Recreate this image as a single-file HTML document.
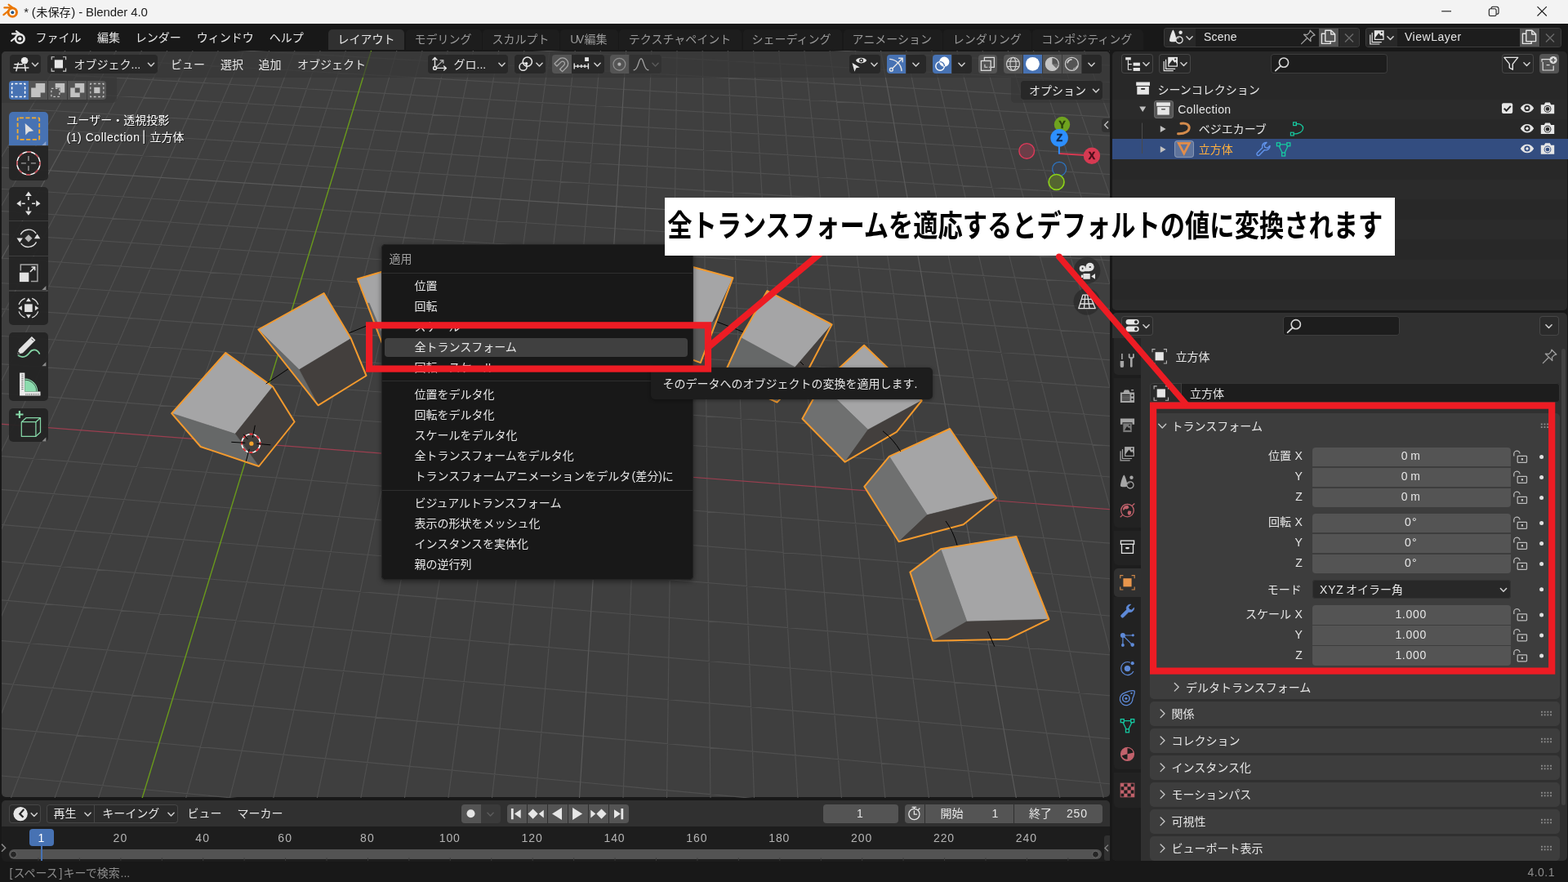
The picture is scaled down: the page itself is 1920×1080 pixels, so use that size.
<!DOCTYPE html>
<html lang="ja"><head><meta charset="utf-8"><title>* (未保存) - Blender 4.0</title>
<style>
html,body{margin:0;padding:0;background:#181818;}
body{width:1920px;height:1080px;overflow:hidden;position:relative;font-family:"Liberation Sans","Noto Sans CJK JP",sans-serif;}
.sec{position:absolute;left:0;top:0;width:1920px;height:1080px;pointer-events:none;}
.sec>div{position:absolute;box-sizing:border-box;}
.ov{position:absolute;left:0;top:0;width:1920px;height:1080px;overflow:hidden;will-change:transform;}
.ov text{font-family:"Liberation Sans","Noto Sans CJK JP",sans-serif;white-space:pre;}
.tx{position:absolute;color:transparent;white-space:nowrap;line-height:1;overflow:hidden;height:1em;}
</style></head>
<body>
<div class="sec" id="titlebar">
<div style="left:0px;top:0px;width:1920px;height:29.3px;background:#f3f3f3;"></div>
<svg class="ov" width="1920" height="1080" viewBox="0 0 1920 1080"><g fill="#1a1a1a"><text x="29.3" y="20.2" font-size="15" textLength="14.4" lengthAdjust="spacing">* (</text></g>
<g fill="#1a1a1a"><text x="44.2" y="19.8" font-size="14.2">未保存</text></g>
<g fill="#1a1a1a"><text x="87.2" y="20.2" font-size="15" textLength="93.62" lengthAdjust="spacing">) - Blender 4.0</text></g>
<g transform="translate(15,15)"><g stroke="#ea7600" stroke-width="2.3" stroke-linecap="round" fill="none"><path d="M-10.6 3.1L-1.5 -4.2"/><path d="M-9.6 -5.6H-1.5"/><path d="M-4.3 -9.2L1 -5.2"/></g><circle r="6.6" cx="0.3" cy="0.2" fill="#ea7600"/><circle r="3.7" cx="0.3" cy="0.2" fill="#fff"/><circle r="2" cx="0.3" cy="0.2" fill="#265787"/></g>
<g stroke="#1a1a1a" stroke-width="1.1" fill="none"><path d="M1765.2 13.8H1777"/><rect x="1823.3" y="10.7" width="8.8" height="8.8" rx="1.8"/><path d="M1826 10.4V10.2A1.9 1.9 0 0 1 1827.9 8.3H1832.6A2.4 2.4 0 0 1 1835 10.7V15.4A1.9 1.9 0 0 1 1833.1 17.3H1832.4"/><path d="M1882.5 8.2L1893.8 19.5M1893.8 8.2L1882.5 19.5"/></g></svg>
<span class="tx" style="left:44.2px;top:7.3px;font-size:14.2px;width:42.6px">未保存</span>
</div>
<div class="sec" id="topbar">
<div style="left:0px;top:29.3px;width:1920px;height:32.7px;background:#181818;"></div>
<div style="left:402px;top:36px;width:93px;height:25px;background:#303030;border-radius:5px 5px 0 0;"></div>
<div style="left:496.7px;top:36px;width:93.4px;height:25px;background:#1d1d1d;border-radius:5px 5px 0 0;"></div>
<div style="left:591.4px;top:36px;width:93.5px;height:25px;background:#1d1d1d;border-radius:5px 5px 0 0;"></div>
<div style="left:686.2px;top:36px;width:70.6px;height:25px;background:#1d1d1d;border-radius:5px 5px 0 0;"></div>
<div style="left:758.1px;top:36px;width:150.4px;height:25px;background:#1d1d1d;border-radius:5px 5px 0 0;"></div>
<div style="left:909.8px;top:36px;width:121.4px;height:25px;background:#1d1d1d;border-radius:5px 5px 0 0;"></div>
<div style="left:1032.5px;top:36px;width:121.5px;height:25px;background:#1d1d1d;border-radius:5px 5px 0 0;"></div>
<div style="left:1155.3px;top:36px;width:107.7px;height:25px;background:#1d1d1d;border-radius:5px 5px 0 0;"></div>
<div style="left:1264.3px;top:36px;width:135.9px;height:25px;background:#1d1d1d;border-radius:5px 5px 0 0;"></div>
<svg class="ov" width="1920" height="1080" viewBox="0 0 1920 1080"><g transform="translate(24.1,47.2)"><g stroke="#e6e6e6" stroke-width="2.2" stroke-linecap="round" fill="none"><path d="M-10.1 2.8L-1.4 -4.2"/><path d="M-9.1 -5.9H-1.4"/><path d="M-4.2 -9L1 -5.1"/></g><circle r="6.6" cx="0.2" cy="0.2" fill="#e6e6e6"/><circle r="4" cx="0.2" cy="0.2" fill="#181818"/><circle r="2.2" cx="0.2" cy="0.2" fill="#e6e6e6"/></g>
<g fill="#e6e6e6"><text x="43.6" y="50.6" font-size="14">ファイル</text></g>
<g fill="#e6e6e6"><text x="119" y="50.6" font-size="14">編集</text></g>
<g fill="#e6e6e6"><text x="165.8" y="50.6" font-size="14">レンダー</text></g>
<g fill="#e6e6e6"><text x="240.8" y="50.6" font-size="14">ウィンドウ</text></g>
<g fill="#e6e6e6"><text x="329.8" y="50.6" font-size="14">ヘルプ</text></g>
<g fill="#e6e6e6"><text x="413.6" y="53.3" font-size="14">レイアウト</text></g>
<g fill="#989898"><text x="507.6" y="53.3" font-size="14">モデリング</text></g>
<g fill="#989898"><text x="602.6" y="53.3" font-size="14">スカルプト</text></g>
<g fill="#989898"><text x="698.3" y="53.3" font-size="14" textLength="17.11" lengthAdjust="spacing">UV</text><text x="715.41" y="53.3" font-size="14">編集</text></g>
<g fill="#989898"><text x="769.8" y="53.3" font-size="14">テクスチャペイント</text></g>
<g fill="#989898"><text x="920.5" y="53.3" font-size="14">シェーディング</text></g>
<g fill="#989898"><text x="1043.5" y="53.3" font-size="14">アニメーション</text></g>
<g fill="#989898"><text x="1166.8" y="53.3" font-size="14">レンダリング</text></g>
<g fill="#989898"><text x="1275.2" y="53.3" font-size="14">コンポジティング</text></g></svg>
<span class="tx" style="left:43.6px;top:38.28px;font-size:14px;width:56px">ファイル</span><span class="tx" style="left:119px;top:38.28px;font-size:14px;width:28px">編集</span><span class="tx" style="left:165.8px;top:38.28px;font-size:14px;width:56px">レンダー</span><span class="tx" style="left:240.8px;top:38.28px;font-size:14px;width:70px">ウィンドウ</span><span class="tx" style="left:329.8px;top:38.28px;font-size:14px;width:42px">ヘルプ</span><span class="tx" style="left:413.6px;top:40.98px;font-size:14px;width:70px">レイアウト</span><span class="tx" style="left:507.6px;top:40.98px;font-size:14px;width:70px">モデリング</span><span class="tx" style="left:602.6px;top:40.98px;font-size:14px;width:70px">スカルプト</span><span class="tx" style="left:715.41px;top:40.98px;font-size:14px;width:28px">編集</span><span class="tx" style="left:769.8px;top:40.98px;font-size:14px;width:126px">テクスチャペイント</span><span class="tx" style="left:920.5px;top:40.98px;font-size:14px;width:98px">シェーディング</span><span class="tx" style="left:1043.5px;top:40.98px;font-size:14px;width:98px">アニメーション</span><span class="tx" style="left:1166.8px;top:40.98px;font-size:14px;width:84px">レンダリング</span><span class="tx" style="left:1275.2px;top:40.98px;font-size:14px;width:112px">コンポジティング</span>
</div>
<div class="sec" id="viewport" style="clip-path:inset(62.5px 561px 103.7px 2px)">
<div style="left:2px;top:62.5px;width:1357px;height:913.8px;background:#3f3f3f;border-radius:5px;"></div>
<svg class="ov" width="1920" height="1080" viewBox="0 0 1920 1080"><path d="M-498.01 1025.84L391.19 -457.54M-446.22 1031.08L409.39 -456.92M-341.94 1041.61L445.88 -455.68M-289.43 1046.92L464.17 -455.06M-236.69 1052.25L482.48 -454.43M-183.69 1057.6L500.82 -453.81M-130.46 1062.98L519.19 -453.18M-76.97 1068.38L537.59 -452.56M-23.24 1073.81L556.02 -451.93M30.75 1079.27L574.48 -451.3M84.99 1084.75L592.97 -450.67M194.24 1095.79L630.02 -449.41M249.25 1101.34L648.6 -448.78M304.52 1106.93L667.2 -448.14M360.06 1112.54L685.83 -447.51M415.86 1118.18L704.49 -446.87M471.92 1123.84L723.18 -446.24M528.25 1129.53L741.9 -445.6M584.85 1135.25L760.65 -444.96M641.73 1141L779.43 -444.32M756.3 1152.57L817.07 -443.04M814 1158.4L835.94 -442.4M871.98 1164.26L854.84 -441.76M930.25 1170.15L873.76 -441.11M988.79 1176.07L892.72 -440.47M1047.63 1182.01L911.71 -439.82M1106.75 1187.98L930.72 -439.17M1166.16 1193.99L949.77 -438.52M1225.87 1200.02L968.85 -437.87M1346.16 1212.17L1007.09 -436.57M1406.76 1218.29L1026.26 -435.92M1467.65 1224.45L1045.46 -435.27M1528.85 1230.63L1064.69 -434.61M1590.36 1236.85L1083.95 -433.95M1652.17 1243.09L1103.24 -433.3M1714.3 1249.37L1122.56 -432.64M1776.73 1255.68L1141.91 -431.98M1839.48 1262.02L1161.3 -431.32M1965.94 1274.79L1200.16 -430M2029.65 1281.23L1219.63 -429.33M2093.69 1287.7L1239.14 -428.67M2158.05 1294.2L1258.68 -428.01M2222.75 1300.74L1278.25 -427.34M2287.77 1307.31L1297.85 -426.67M2353.13 1313.91L1317.49 -426M2418.83 1320.55L1337.15 -425.33M2484.87 1327.22L1356.85 -424.66M2617.97 1340.67L1396.34 -423.32M2685.05 1347.45L1416.13 -422.64M2752.47 1354.26L1435.96 -421.97M2820.25 1361.11L1455.81 -421.29M-498.01 1025.84L2888.39 1367.99M-427.91 908.89L2766.92 1214.21M-395.53 854.88L2711.45 1143.98M-364.75 803.54L2659.1 1077.69M-335.46 754.68L2609.6 1015.02M-307.56 708.13L2562.74 955.69M-280.94 663.72L2518.3 899.43M-255.52 621.32L2476.11 846M-231.23 580.79L2435.99 795.21M-207.98 542.01L2397.8 746.86M-164.37 469.25L2326.68 656.81M-143.88 435.08L2293.51 614.81M-124.22 402.28L2261.79 574.65M-105.32 370.74L2231.43 536.22M-87.14 340.42L2202.35 499.4M-69.64 311.22L2174.46 464.09M-52.78 283.11L2147.7 430.21M-36.54 256.01L2122 397.66M-20.87 229.87L2097.29 366.38M8.86 180.28L2050.64 307.31M22.97 156.73L2028.59 279.4M36.62 133.97L2007.34 252.5M49.82 111.95L1986.84 226.54M62.59 90.64L1967.05 201.48M74.97 70L1947.94 177.28M86.95 50L1929.46 153.89M98.58 30.61L1911.6 131.28M109.85 11.8L1894.32 109.39M131.4 -24.15L1861.38 67.69M141.71 -41.35L1845.67 47.81M151.73 -58.07L1830.45 28.53M161.47 -74.31L1815.68 9.83M170.94 -90.1L1801.35 -8.32M180.15 -105.47L1787.43 -25.93M189.11 -120.42L1773.92 -43.04M197.83 -134.97L1760.79 -59.67M206.33 -149.14L1748.02 -75.83M222.67 -176.4L1723.53 -106.84M230.53 -189.52L1711.78 -121.72M238.2 -202.31L1700.34 -136.2M245.67 -214.78L1689.2 -150.31M252.97 -226.95L1678.34 -164.06M260.09 -238.83L1667.76 -177.45M267.04 -250.43L1657.45 -190.51M273.83 -261.76L1647.39 -203.25M280.46 -272.82L1637.58 -215.67M293.28 -294.19L1618.66 -239.62M299.47 -304.52L1609.53 -251.17M305.52 -314.62L1600.62 -262.46M311.44 -324.5L1591.92 -273.48M317.24 -334.17L1583.41 -284.25M322.91 -343.63L1575.09 -294.78M328.46 -352.88L1566.97 -305.07M333.89 -361.95L1559.02 -315.13M339.21 -370.82L1551.24 -324.98M349.53 -388.03L1536.19 -344.04M354.53 -396.38L1528.9 -353.27M359.43 -404.56L1521.76 -362.3M364.24 -412.57L1514.77 -371.15M368.95 -420.43L1507.93 -379.82M373.57 -428.14L1501.22 -388.31M378.1 -435.7L1494.65 -396.63M382.55 -443.12L1488.21 -404.78M386.91 -450.4L1481.89 -412.78" stroke="#505050" stroke-width="1.15" fill="none"/>
<path d="M-394.2 1036.33L427.62 -456.3M698.88 1146.77L798.23 -443.68M1285.87 1206.08L987.95 -437.22M1902.55 1268.39L1180.71 -430.66M2551.25 1333.93L1376.58 -423.99M-462.02 965.8L2825.79 1288.74M-5.75 204.64L2073.52 336.29M120.79 -6.44L1877.58 88.21M214.6 -162.95L1735.61 -91.55M286.94 -283.63L1628 -227.79M344.42 -379.52L1543.63 -334.61" stroke="#5a5a5a" stroke-width="1.2" fill="none"/>
<path d="M-185.71 504.86L2361.4 700.78" stroke="#9b3f50" stroke-width="1.2" fill="none"/>
<path d="M139.49 1090.25L611.48 -450.04" stroke="#6a9a1c" stroke-width="1.4" fill="none"/>
<polygon points="276.3,432 334,473.5 288,531.3 210.2,506.2" fill="#a5a5a6" stroke="#a5a5a6" stroke-width="0.6" stroke-linejoin="round"/>
<polygon points="334,473.5 360.6,516.5 317,571 288,531.3" fill="#433f3d" stroke="#433f3d" stroke-width="0.6" stroke-linejoin="round"/>
<polygon points="210.2,506.2 288,531.3 317,571 245.7,547" fill="#666868" stroke="#666868" stroke-width="0.6" stroke-linejoin="round"/>
<polygon points="276.3,432 334,473.5 360.6,516.5 317,571 245.7,547 210.2,506.2" fill="none" stroke="#f39a2e" stroke-width="2" stroke-linejoin="round"/>
<polygon points="396.6,359 429.8,414.6 366.3,452.7 316.3,403.5" fill="#a5a5a6" stroke="#a5a5a6" stroke-width="0.6" stroke-linejoin="round"/>
<polygon points="429.8,414.6 448.5,460 389.6,496.3 366.3,452.7" fill="#433f3d" stroke="#433f3d" stroke-width="0.6" stroke-linejoin="round"/>
<polygon points="316.3,403.5 366.3,452.7 389.6,496.3" fill="#666868" stroke="#666868" stroke-width="0.6" stroke-linejoin="round"/>
<polygon points="396.6,359 429.8,414.6 448.5,460 389.6,496.3 316.3,403.5" fill="none" stroke="#f39a2e" stroke-width="2" stroke-linejoin="round"/>
<polygon points="437.8,341.5 480,329 480,440 466.2,416" fill="#a5a5a6" stroke="#a5a5a6" stroke-width="0.6" stroke-linejoin="round"/>
<polygon points="449.5,371.5 452,371 468,409 466.2,416" fill="#666868" stroke="#666868" stroke-width="0.6" stroke-linejoin="round"/>
<polyline points="480,329.3 437.8,341.5 466.4,416.4 480,452" fill="none" stroke="#f39a2e" stroke-width="2" stroke-linejoin="round"/>
<polygon points="830,322 897.5,340.2 872.6,394.4 830,404" fill="#a5a5a6" stroke="#a5a5a6" stroke-width="0.6" stroke-linejoin="round"/>
<polygon points="830,404 872.6,394.4 879,389 857.8,444.1 830,434" fill="#5b5b5b" stroke="#5b5b5b" stroke-width="0.6" stroke-linejoin="round"/>
<polygon points="897.5,340.2 879.2,388.4 872.6,394.4" fill="#433f3d" stroke="#433f3d" stroke-width="0.6" stroke-linejoin="round"/>
<polyline points="830,322 897.5,340.2 857.8,444.1 830,434" fill="none" stroke="#f39a2e" stroke-width="2" stroke-linejoin="round"/>
<polygon points="939.4,356.2 1018.6,397.3 973.5,449.7 907.1,413.4" fill="#a5a5a6" stroke="#a5a5a6" stroke-width="0.6" stroke-linejoin="round"/>
<polygon points="907.1,413.4 973.5,449.7 951.5,492.6 885,462" fill="#666868" stroke="#666868" stroke-width="0.6" stroke-linejoin="round"/>
<polygon points="1018.6,397.3 990,452 951.5,492.6 973.5,449.7" fill="#433f3d" stroke="#433f3d" stroke-width="0.6" stroke-linejoin="round"/>
<polygon points="939.4,356.2 1018.6,397.3 990,452 951.5,492.6 885,462 907.1,413.4" fill="none" stroke="#f39a2e" stroke-width="2" stroke-linejoin="round"/>
<polygon points="1058.1,422.8 1128.7,490.5 1062.9,526.2 1005.6,470.9" fill="#a5a5a6" stroke="#a5a5a6" stroke-width="0.6" stroke-linejoin="round"/>
<polygon points="1005.6,470.9 1062.9,526.2 1034.7,565.7 982.4,512.8" fill="#6f7070" stroke="#6f7070" stroke-width="0.6" stroke-linejoin="round"/>
<polygon points="1128.7,490.5 1097.9,528.9 1034.7,565.7 1062.9,526.2" fill="#433f3d" stroke="#433f3d" stroke-width="0.6" stroke-linejoin="round"/>
<polygon points="1058.1,422.8 1128.7,490.5 1097.9,528.9 1034.7,565.7 982.4,512.8 1005.6,470.9" fill="none" stroke="#f39a2e" stroke-width="2" stroke-linejoin="round"/>
<polygon points="1163.1,525 1220,609.7 1135.3,630.6 1088.9,558.9" fill="#a5a5a6" stroke="#a5a5a6" stroke-width="0.6" stroke-linejoin="round"/>
<polygon points="1088.9,558.9 1135.3,630.6 1100.6,663.3 1058.3,595.8" fill="#6f7070" stroke="#6f7070" stroke-width="0.6" stroke-linejoin="round"/>
<polygon points="1135.3,630.6 1220,609.7 1179.7,642.2 1100.6,663.3" fill="#433f3d" stroke="#433f3d" stroke-width="0.6" stroke-linejoin="round"/>
<polygon points="1163.1,525 1220,609.7 1179.7,642.2 1100.6,663.3 1058.3,595.8 1088.9,558.9" fill="none" stroke="#f39a2e" stroke-width="2" stroke-linejoin="round"/>
<polygon points="1244.4,657 1284.4,758.3 1183.9,761.1 1151.9,672.2" fill="#a5a5a6" stroke="#a5a5a6" stroke-width="0.6" stroke-linejoin="round"/>
<polygon points="1151.9,672.2 1183.9,761.1 1142.2,784.7 1114.4,700.6" fill="#6f7070" stroke="#6f7070" stroke-width="0.6" stroke-linejoin="round"/>
<polygon points="1183.9,761.1 1284.4,758.3 1233.9,782.8 1142.2,784.7" fill="#433f3d" stroke="#433f3d" stroke-width="0.6" stroke-linejoin="round"/>
<polygon points="1244.4,657 1284.4,758.3 1233.9,782.8 1142.2,784.7 1114.4,700.6 1151.9,672.2" fill="none" stroke="#f39a2e" stroke-width="2" stroke-linejoin="round"/>
<path d="M325.7 470 L352.8 451.8 M427.4 407.8 L448.4 399.2 M1081 527.8 Q1094 538 1102.8 552.8 M1158 638 Q1167 650 1172 667.5 M1209.7 773 L1217.8 791.7 M878.3 394.2 L909.8 406.3 M980 443 L984 447" stroke="#000" stroke-width="1" fill="none"/>
<g transform="translate(307.3,542.8)"><circle r="11.3" fill="none" stroke="#fff" stroke-width="1.6"/><circle r="11.3" fill="none" stroke="#e0222a" stroke-width="1.8" stroke-dasharray="4.44 4.44" stroke-dashoffset="2.2"/><path d="M-24 -1.5L-7 -0.5M7 0.5L24 2M5 -22L2 -7M-2 7L-6 22M-9 -11L-4 -5" stroke="#000" stroke-width="1" fill="none"/><circle r="2.6" cx="0.6" cy="0.4" fill="#f5a32c"/></g></svg>

</div>
<div class="sec" id="viewport-ui" style="clip-path:inset(62.5px 561px 103.7px 2px)">
<div style="left:2px;top:62.5px;width:1357px;height:32.5px;background:rgba(55,55,55,0.68);border-radius:5px 5px 0 0;"></div>
<div style="left:2px;top:95px;width:141px;height:31px;background:rgba(55,55,55,0.68);border-radius:0 0 5px 0;"></div>
<div style="left:1238px;top:95px;width:121px;height:31px;background:rgba(55,55,55,0.68);border-radius:0 0 0 5px;"></div>
<div style="left:12px;top:67px;width:38px;height:23px;background:#282828;border-radius:4px;"></div>
<div style="left:58px;top:67px;width:135px;height:23px;background:#282828;border-radius:4px;"></div>
<div style="left:524px;top:67px;width:98px;height:23px;background:#282828;border-radius:4px;"></div>
<div style="left:630px;top:67px;width:38px;height:23px;background:#282828;border-radius:4px;"></div>
<div style="left:676px;top:67px;width:23.5px;height:23px;background:#545454;border-radius:4px 0 0 4px;"></div>
<div style="left:700px;top:67px;width:39.5px;height:23px;background:#282828;border-radius:0 4px 4px 0;"></div>
<div style="left:747px;top:67px;width:23px;height:23px;background:#545454;border-radius:4px 0 0 4px;"></div>
<div style="left:771px;top:67px;width:38.5px;height:23px;background:#323232;border-radius:0 4px 4px 0;"></div>
<div style="left:1040px;top:67px;width:38px;height:23px;background:#282828;border-radius:4px;"></div>
<div style="left:1086px;top:67px;width:23px;height:23px;background:#4772b3;border-radius:4px 0 0 4px;"></div>
<div style="left:1110px;top:67px;width:24px;height:23px;background:#282828;border-radius:0 4px 4px 0;"></div>
<div style="left:1142px;top:67px;width:23px;height:23px;background:#4772b3;border-radius:4px 0 0 4px;"></div>
<div style="left:1166px;top:67px;width:24px;height:23px;background:#282828;border-radius:0 4px 4px 0;"></div>
<div style="left:1198px;top:67px;width:23px;height:23px;background:#545454;border-radius:4px;"></div>
<div style="left:1229px;top:67px;width:23.4px;height:23px;background:#545454;border-radius:4px 0 0 4px;"></div>
<div style="left:1253px;top:67px;width:23.2px;height:23px;background:#4772b3;"></div>
<div style="left:1277px;top:67px;width:23px;height:23px;background:#545454;"></div>
<div style="left:1301px;top:67px;width:23px;height:23px;background:#545454;"></div>
<div style="left:1325px;top:67px;width:23.5px;height:23px;background:#282828;border-radius:0 4px 4px 0;"></div>
<div style="left:1250px;top:99px;width:100px;height:23px;background:#282828;border-radius:4px;"></div>
<div style="left:11px;top:99px;width:23.5px;height:23px;background:#4772b3;border-radius:4px 0 0 4px;"></div>
<div style="left:35px;top:99px;width:23.2px;height:23px;background:#545454;"></div>
<div style="left:59px;top:99px;width:23.2px;height:23px;background:#545454;"></div>
<div style="left:83px;top:99px;width:23.2px;height:23px;background:#545454;"></div>
<div style="left:107px;top:99px;width:23.2px;height:23px;background:#545454;border-radius:0 4px 4px 0;"></div>
<div style="left:11px;top:137px;width:48px;height:41.4px;background:#4772b3;border-radius:5px 5px 0 0;"></div>
<div style="left:11px;top:179.3px;width:48px;height:41.4px;background:rgba(36,36,36,0.93);border-radius:0 0 5px 5px;"></div>
<div style="left:11px;top:228.6px;width:48px;height:41.4px;background:rgba(36,36,36,0.93);border-radius:5px 5px 0 0;"></div>
<div style="left:11px;top:271.2px;width:48px;height:41.4px;background:rgba(36,36,36,0.93);border-radius:0 0 0 0;"></div>
<div style="left:11px;top:313.9px;width:48px;height:41.4px;background:rgba(36,36,36,0.93);border-radius:0 0 0 0;"></div>
<div style="left:11px;top:356.6px;width:48px;height:41.4px;background:rgba(36,36,36,0.93);border-radius:0 0 5px 5px;"></div>
<div style="left:11px;top:407.2px;width:48px;height:41.4px;background:rgba(36,36,36,0.93);border-radius:5px 5px 0 0;"></div>
<div style="left:11px;top:449.4px;width:48px;height:41.4px;background:rgba(36,36,36,0.93);border-radius:0 0 5px 5px;"></div>
<div style="left:11px;top:499.5px;width:48px;height:41.4px;background:rgba(36,36,36,0.93);border-radius:5px 5px 5px 5px;"></div>
<div style="left:1349px;top:145px;width:11px;height:17px;background:rgba(48,48,48,0.9);border-radius:4px 0 0 4px;"></div>
<svg class="ov" width="1920" height="1080" viewBox="0 0 1920 1080"><path d="M39.4 77.2L43 80.9L46.6 77.2" stroke="#d0d0d0" stroke-width="1.5" fill="none" stroke-linecap="round" stroke-linejoin="round"/>
<g transform="translate(25.9,79)"><g stroke="#e6e6e6" stroke-width="1.5" fill="none" stroke-linecap="round"><path d="M-8 -0.2H1.5M-9 4H9M-3.5 -2L-6 7.7M4.5 0.5L5.5 7.7"/></g><circle cx="4.2" cy="-4.8" r="4.3" fill="#e6e6e6"/><circle cx="3" cy="-6" r="1.2" fill="#fff"/></g>
<g fill="#e6e6e6"><text x="90.5" y="83.6" font-size="14">オブジェク</text><text x="160.5" y="83.6" font-size="14">...</text></g>
<path d="M181.4 77.2L185 80.9L188.6 77.2" stroke="#d0d0d0" stroke-width="1.5" fill="none" stroke-linecap="round" stroke-linejoin="round"/>
<g transform="translate(71.9,78.4)"><path d="M-8.7 -5.1V-8.7H-5.1M5.1 -8.7H8.7V-5.1M8.7 5.1V8.7H5.1M-5.1 8.7H-8.7V5.1" stroke="#e6e6e6" stroke-width="1.15" fill="none" opacity="0.85"/><rect x="-5.1" y="-5.1" width="10.2" height="10.2" fill="#e6e6e6"/></g>
<g fill="#e6e6e6"><text x="209" y="83.6" font-size="14">ビュー</text></g>
<g fill="#e6e6e6"><text x="270" y="83.6" font-size="14">選択</text></g>
<g fill="#e6e6e6"><text x="316.5" y="83.6" font-size="14">追加</text></g>
<g fill="#e6e6e6"><text x="364" y="83.6" font-size="14">オブジェクト</text></g>
<g fill="#e6e6e6"><text x="555.5" y="83.6" font-size="14">グロ</text><text x="583.5" y="83.6" font-size="14">...</text></g>
<path d="M610.9 77.2L614.5 80.9L618.1 77.2" stroke="#d0d0d0" stroke-width="1.5" fill="none" stroke-linecap="round" stroke-linejoin="round"/>
<g transform="translate(538,78.5)"><g stroke="#e6e6e6" stroke-width="1.4" fill="none" stroke-linecap="round" stroke-linejoin="round"><path d="M-5.5 3V-7.5M-8 -5.2L-5.5 -8L-3 -5.2M-3.8 4.9H8M5.6 2.4L8.4 4.9L5.6 7.4"/><path d="M-4 3.5L4.5 -4.5M1.2 -4.8H4.8V-1.2" stroke="#a8a8a8"/><circle cx="-5.5" cy="4.9" r="1.9" fill="#282828"/></g></g>
<path d="M656.9 77.2L660.5 80.9L664.1 77.2" stroke="#d0d0d0" stroke-width="1.5" fill="none" stroke-linecap="round" stroke-linejoin="round"/>
<g transform="translate(643.6,78.5)"><g stroke="#e6e6e6" stroke-width="1.5" fill="none"><circle cx="2.2" cy="-2.9" r="5.6"/><circle cx="-3" cy="3.2" r="4.6"/></g><circle cx="1" cy="-0.8" r="1.7" fill="#e6e6e6"/></g>
<path d="M727.9 77.2L731.5 80.9L735.1 77.2" stroke="#d0d0d0" stroke-width="1.5" fill="none" stroke-linecap="round" stroke-linejoin="round"/>
<g transform="translate(688,78.6)"><g transform="rotate(45)" stroke="#a6a6a6" stroke-width="1.3" fill="none" stroke-linejoin="round"><path d="M-6.8 6V-1.2A6.8 6.8 0 0 1 6.8 -1.2V6H2.6V-1.2A2.6 2.6 0 0 0 -2.6 -1.2V6Z"/></g></g>
<g transform="translate(711.8,78.8)"><path d="M-8.6 2.3H8.6M-8.6 -1.2V5.8M8.6 -1.2V5.8M-4.3 0.3V4.3M0 0.3V4.3M4.3 0.3V4.3" stroke="#e6e6e6" stroke-width="1.4" fill="none"/><rect x="4.3" y="-8.6" width="4.8" height="4.8" fill="#e6e6e6"/></g>
<path d="M798.9 77.2L802.5 80.9L806.1 77.2" stroke="#5a5a5a" stroke-width="1.5" fill="none" stroke-linecap="round" stroke-linejoin="round"/>
<g transform="translate(758.4,78.7)"><circle r="7.4" fill="none" stroke="#8e8e8e" stroke-width="1.2"/><circle r="2.1" fill="#b0b0b0"/></g>
<g transform="translate(785,78.8)"><path d="M-8.8 7C-3 7 -3.4 -7 0 -7S3 7 8.8 7" stroke="#a0a0a0" stroke-width="1.4" fill="none" stroke-linecap="round"/></g>
<path d="M1066.9 77.2L1070.5 80.9L1074.1 77.2" stroke="#d0d0d0" stroke-width="1.5" fill="none" stroke-linecap="round" stroke-linejoin="round"/>
<g transform="translate(1052,78.3)"><path d="M-4 -4.2C-1.5 -8.6 6.5 -8.6 9.2 -4.2C6.5 0.2 -1.5 0.2 -4 -4.2Z" fill="#e6e6e6"/><circle cx="2.6" cy="-4.3" r="2.5" fill="#282828"/><circle cx="2.6" cy="-4.3" r="1.1" fill="#e6e6e6"/><path d="M-8.5 -1.2L0.8 4.2L-3.6 5L-5.6 9.4Z" fill="#e6e6e6"/></g>
<path d="M1117.9 77.2L1121.5 80.9L1125.1 77.2" stroke="#d0d0d0" stroke-width="1.5" fill="none" stroke-linecap="round" stroke-linejoin="round"/>
<g transform="translate(1097.4,78.6)"><g stroke="#e6e6e6" stroke-width="1.4" fill="none" stroke-linecap="round" stroke-linejoin="round"><path d="M-7.8 -6.2C0 -5.5 6 0 6.6 8"/><path d="M-4.6 5.2L7.6 -7M3.2 -7.4H7.8V-2.8"/><circle cx="-6" cy="6.6" r="1.9"/></g></g>
<path d="M1173.9 77.2L1177.5 80.9L1181.1 77.2" stroke="#d0d0d0" stroke-width="1.5" fill="none" stroke-linecap="round" stroke-linejoin="round"/>
<g transform="translate(1153.5,78.3)"><circle cx="2.8" cy="-2.6" r="6.1" fill="#fff"/><circle cx="-2.4" cy="2.6" r="5.3" fill="none" stroke="#fff" stroke-width="1.4"/><path d="M-2.4 -2.7A5.3 5.3 0 0 1 2.9 2.6" stroke="#4772b3" stroke-width="1.4" fill="none"/></g>
<g transform="translate(1209.4,78.3)"><g stroke="#dcdcdc" stroke-width="1.3" fill="none"><path d="M-4 -4V-8H8V4H4"/><rect x="-8" y="-3.8" width="11.8" height="11.8"/><path d="M-3.5 0.5V4H0M1.5 4H3" stroke-width="1.1"/></g></g>
<path d="M1332.9 77.2L1336.5 80.9L1340.1 77.2" stroke="#d0d0d0" stroke-width="1.5" fill="none" stroke-linecap="round" stroke-linejoin="round"/>
<g transform="translate(1240.5,78.3)"><g stroke="#cfcfcf" stroke-width="1.2" fill="none"><circle r="8"/><ellipse rx="3.6" ry="8"/><path d="M-7.3 -3.2H7.3M-7.3 3.2H7.3"/></g></g>
<g transform="translate(1264.4,78.3)"><circle r="8.4" fill="#fff"/></g>
<g transform="translate(1288.4,78.3)"><circle r="8" fill="none" stroke="#cfcfcf" stroke-width="1.2"/><path d="M0 0V-8A8 8 0 1 0 5.7 5.7Z" fill="#c4c4c4"/><path d="M0 0H8A8 8 0 0 1 5.7 5.7Z" fill="#707070"/><path d="M3.5 6.9l1 -2M5.6 5.3l1 -2M7 3.2l0.8 -1.6" stroke="#cfcfcf" stroke-width="0.9"/></g>
<g transform="translate(1312.4,78.3)"><circle r="8" fill="none" stroke="#cfcfcf" stroke-width="1.2"/><path d="M-5.2 -1.6A5.4 5.4 0 0 1 -0.5 -5.4" stroke="#cfcfcf" stroke-width="1.7" fill="none" stroke-linecap="round"/><path d="M2 6.8l1.2 -2.2M4.3 5.5l1.2 -2.2M6 3.6l1 -1.8" stroke="#cfcfcf" stroke-width="0.9"/></g>
<g fill="#e6e6e6"><text x="1260" y="115.6" font-size="14">オプション</text></g>
<path d="M1338.4 109.2L1342 112.9L1345.6 109.2" stroke="#d0d0d0" stroke-width="1.5" fill="none" stroke-linecap="round" stroke-linejoin="round"/>
<g transform="translate(22.6,110.5)"><rect x="-8" y="-8" width="16" height="16" fill="none" stroke="#fff" stroke-width="1.5" stroke-dasharray="3.2 2.13" stroke-dashoffset="1.6"/></g>
<g transform="translate(46.65,110.5)"><path d="M-3 -8.5H8.5V3H3V8.5H-8.5V-3H-3Z" fill="#c2c2c2"/></g>
<g transform="translate(70.7,110.5)"><path d="M-3 -8.5H8.5V3H3V-3H-3Z" fill="#c2c2c2"/><rect x="-7.8" y="-2.2" width="10" height="10" fill="none" stroke="#c2c2c2" stroke-width="1.3" stroke-dasharray="2.6 2.4"/></g>
<g transform="translate(94.75,110.5)"><path d="M-3 -8.5H8.5V3H3V8.5H-8.5V-3H-3Z" fill="#c2c2c2"/><rect x="-3" y="-3" width="6" height="6" fill="#545454"/></g>
<g transform="translate(118.8,110.5)"><rect x="-8" y="-8" width="16" height="16" fill="none" stroke="#c2c2c2" stroke-width="1.3" stroke-dasharray="2.8 2.53" stroke-dashoffset="1.4"/><rect x="-3.6" y="-3.6" width="7.2" height="7.2" fill="#c2c2c2"/></g>
<g transform="translate(34.9,157.6)"><rect x="-13.3" y="-13.3" width="26.6" height="26.6" rx="1" fill="none" stroke="#f5ab2c" stroke-width="1.8" stroke-dasharray="5.1 2.5" stroke-dashoffset="-1.2"/><path d="M-4.2 -6.6L6.3 2.6L0.3 3.6L-3.6 8Z" fill="#dedede"/><path d="M21.5 15.5V20.5H16.5Z" fill="#8aa3cf"/></g>
<g transform="translate(34.9,199.9)"><circle r="14" fill="none" stroke="#fff" stroke-width="1.5"/><circle r="14" fill="none" stroke="#b9464f" stroke-width="1.6" stroke-dasharray="5.5 5.5" stroke-dashoffset="2.75"/><path d="M-9 0H-3M3 0H9M0 -9V-3M0 3V9" stroke="#9c9c9c" stroke-width="1.4"/></g>
<g transform="translate(34.9,249.2)"><path d="M0 -14.6L3.9 -9.3H-3.9ZM0 14.6L3.9 9.3H-3.9ZM-14.6 0L-9.3 -3.9V3.9ZM14.6 0L9.3 -3.9V3.9Z" fill="#e0e0e0"/><path d="M0 -8.2V-4.2M0 4.2V8.2M-8.2 0H-4.2M4.2 0H8.2" stroke="#e0e0e0" stroke-width="1.6"/></g>
<g transform="translate(34.9,291.8)"><path d="M-9.6 -4.6A11 11 0 0 1 9.2 -6M9.6 4.6A11 11 0 0 1 -9.2 6" stroke="#e0e0e0" stroke-width="1.4" fill="none"/><path d="M0 -4.6L4.6 0L0 4.6L-4.6 0Z" fill="#b4b4b4"/><path d="M-14.4 -0.4H-7L-10.7 5.2ZM14.4 0.4H7L10.7 -5.2Z" fill="#e0e0e0"/></g>
<g transform="translate(34.9,334.5)"><path d="M-9.6 -3V-10.6H11V10H3" stroke="#a4a4a4" stroke-width="1.5" fill="none"/><rect x="-11" y="-0.8" width="11.4" height="11.4" fill="#e0e0e0"/><path d="M2 -1.6L7.3 -6.9M3.6 -7.4H7.8V-3.2" stroke="#e0e0e0" stroke-width="1.5" fill="none"/><path d="M21.5 15.5V20.5H16.5Z" fill="#8a8a8a"/></g>
<g transform="translate(34.9,377.2)"><rect x="-4.8" y="-4.8" width="9.6" height="9.6" fill="#e0e0e0"/><path d="M-4.2 -11.8A12.5 12.5 0 0 0 -11.8 -4.2M4.2 -11.8A12.5 12.5 0 0 1 11.8 -4.2M11.8 4.2A12.5 12.5 0 0 1 4.2 11.8M-4.2 11.8A12.5 12.5 0 0 1 -11.8 4.2" stroke="#e0e0e0" stroke-width="1.3" fill="none"/><path d="M0 -12.5L3 -8H-3ZM0 12.5L3 8H-3ZM-12.5 0L-8 -3V3ZM12.5 0L8 -3V3Z" fill="#e0e0e0"/></g>
<g transform="translate(34.9,427.8)"><path d="M-14 6.5L-11.6 -0.2L4 -15.8L8.6 -11.2L-7 4.4Z" fill="#e2e2e2"/><path d="M3.6 -13L6 -10.6" stroke="#2a2a2a" stroke-width="1"/><path d="M-14 6.5L-12.6 2.6L-10.2 5Z" fill="#333"/><path d="M-12.4 7.6C-6 11.6 -1 7 1.6 3.6S9.6 -1.4 13.4 5.2" stroke="#86d8a8" stroke-width="1.7" fill="none" stroke-linecap="round"/><path d="M21.5 15.5V20.5H16.5Z" fill="#8a8a8a"/></g>
<g transform="translate(34.9,470)"><path d="M-10.8 -13.6H-4.6V9.6H14.6V14.6H-10.8Z" fill="#ececec"/><path d="M-8.6 -11h2.4M-8.6 -8.8h2.4M-8.6 -6.6h2.4M-8.6 -4.4h2.4M-8.6 -2.2h2.4M-8.6 0h2.4M-8.6 2.2h2.4M-8.6 4.4h2.4M-8.6 6.6h2.4M-3 11.8v2M-0.8 11.8v2M1.4 11.8v2M3.6 11.8v2M5.8 11.8v2M8 11.8v2M10.2 11.8v2M12.4 11.8v2" stroke="#555" stroke-width="0.8"/><path d="M-4.6 9.6V-4.6A14.2 14.2 0 0 1 9.6 9.6Z" fill="#8bdcae"/><path d="M-4.6 -5.8A15.4 15.4 0 0 1 10.8 9.6" stroke="#8bdcae" stroke-width="1.2" fill="none"/></g>
<g transform="translate(34.9,520.1)"><g stroke="#86d8a8" stroke-width="1.25" fill="none" stroke-linejoin="round"><rect x="-8.6" y="-3.4" width="17.6" height="17.6"/><path d="M-8.6 -3.4L-3 -8.4H14.6L9 -3.4M14.6 -8.4V9.2L9 14.2"/></g><path d="M-15.6 -12.6H-6.4M-11 -17.2V-8" stroke="#86d8a8" stroke-width="2.2"/><path d="M21.5 15.5V20.5H16.5Z" fill="#8a8a8a"/></g>
<g fill="#000" opacity="0.55"><text x="82.5" y="153" font-size="14">ユーザー・透視投影</text></g>
<g fill="#000" opacity="0.55"><text x="82.5" y="174.4" font-size="14" textLength="89.49" lengthAdjust="spacing">(1) Collection</text></g>
<rect x="176.5" y="160.4" width="1.3" height="16.6" fill="#000" opacity="0.55"/>
<g fill="#000" opacity="0.55"><text x="184.5" y="174.4" font-size="14">立方体</text></g>
<g fill="#fff"><text x="81.5" y="152" font-size="14">ユーザー・透視投影</text></g>
<g fill="#fff"><text x="81.5" y="173.4" font-size="14" textLength="89.49" lengthAdjust="spacing">(1) Collection</text></g>
<rect x="175.5" y="159.4" width="1.3" height="16.6" fill="#fff"/>
<g fill="#fff"><text x="183.5" y="173.4" font-size="14">立方体</text></g>
<circle cx="1257.2" cy="184.9" r="9.3" fill="#6b3e48" stroke="#e0395a" stroke-width="1.4"/><circle cx="1297.1" cy="206.8" r="8.5" fill="#3c424c" stroke="#2d76c4" stroke-width="1.2"/><circle cx="1293.6" cy="222.9" r="9.4" fill="#546530" stroke="#8cd019" stroke-width="1.7"/><circle cx="1300.5" cy="152.5" r="9.7" fill="#6fa31f"/><path d="M1296.8 187.9L1336 190.6" stroke="#d63a52" stroke-width="2"/><path d="M1296.9 188.6V170" stroke="#2d8fff" stroke-width="2"/><circle cx="1336.9" cy="190.8" r="10.2" fill="#d63a52"/><circle cx="1297.1" cy="168.8" r="10.8" fill="#2d8fff"/>
<text x="1300.7" y="157.1" font-size="12.4" font-weight="bold" text-anchor="middle" fill="#2c420c" stroke="#2c420c" stroke-width="0.5">Y</text>
<text x="1297.2" y="173.3" font-size="12.4" font-weight="bold" text-anchor="middle" fill="#0e2a50" stroke="#0e2a50" stroke-width="0.5">Z</text>
<text x="1337" y="195.3" font-size="12.4" font-weight="bold" text-anchor="middle" fill="#4b0e1a" stroke="#4b0e1a" stroke-width="0.5">X</text>
<circle cx="1331.1" cy="331.2" r="16.3" fill="#222" fill-opacity="0.55"/><circle cx="1330.8" cy="369.4" r="16.3" fill="#222" fill-opacity="0.55"/>
<g transform="translate(1331.2,331.2)"><circle cx="3.4" cy="-4.4" r="5.1" fill="#e2e2e2"/><circle cx="-5.6" cy="-2.4" r="3.9" fill="#e2e2e2"/><rect x="-5.2" y="-3" width="8" height="4" fill="#e2e2e2"/><ellipse cx="3.6" cy="-4.2" rx="1.3" ry="0.9" fill="#333"/><ellipse cx="-5.6" cy="-2.4" rx="0.9" ry="1.2" fill="#333"/><rect x="-4.8" y="3.8" width="8.4" height="6.8" rx="0.6" fill="#e2e2e2"/><path d="M5 7.2L9.8 3.8V10.6Z" fill="#e2e2e2"/><rect x="-7.4" y="5.4" width="2.6" height="3.4" fill="#e2e2e2"/></g>
<g transform="translate(1330.6,369.4)"><g stroke="#e2e2e2" stroke-width="1.3" fill="none" stroke-linejoin="round"><path d="M-4.7 -8.3H4L10.6 8.3H-9.8Z"/><path d="M-6.2 -3H5.9M-7.9 2.6H8.2M-1.8 -8.3L-3.2 8.3M1.1 -8.3L3.5 8.3"/></g></g>
<path d="M1357 148.4L1352.6 153L1357 157.6" stroke="#bdbdbd" stroke-width="1.5" fill="none"/></svg>
<span class="tx" style="left:90.5px;top:71.28px;font-size:14px;width:70px">オブジェク</span><span class="tx" style="left:209px;top:71.28px;font-size:14px;width:42px">ビュー</span><span class="tx" style="left:270px;top:71.28px;font-size:14px;width:28px">選択</span><span class="tx" style="left:316.5px;top:71.28px;font-size:14px;width:28px">追加</span><span class="tx" style="left:364px;top:71.28px;font-size:14px;width:84px">オブジェクト</span><span class="tx" style="left:555.5px;top:71.28px;font-size:14px;width:28px">グロ</span><span class="tx" style="left:1260px;top:103.28px;font-size:14px;width:70px">オプション</span><span class="tx" style="left:82.5px;top:140.68px;font-size:14px;width:126px">ユーザー・透視投影</span><span class="tx" style="left:184.5px;top:162.08px;font-size:14px;width:42px">立方体</span><span class="tx" style="left:81.5px;top:139.68px;font-size:14px;width:126px">ユーザー・透視投影</span><span class="tx" style="left:183.5px;top:161.08px;font-size:14px;width:42px">立方体</span>
</div>
<div class="sec" id="menu">
<div style="left:466.5px;top:298.5px;width:382px;height:411.5px;background:#181818;border-radius:5px;box-shadow:0 2px 6px rgba(0,0,0,0.45), inset 0 0 0 1px #242424;"></div>
<div style="left:467.5px;top:333.5px;width:380px;height:1px;background:#2e2e2e;"></div>
<div style="left:467.5px;top:466px;width:380px;height:1px;background:#2e2e2e;"></div>
<div style="left:467.5px;top:599.5px;width:380px;height:1px;background:#2e2e2e;"></div>
<div style="left:471px;top:414.2px;width:371px;height:22.5px;background:#404040;border-radius:4px;"></div>
<svg class="ov" width="1920" height="1080" viewBox="0 0 1920 1080"><g fill="#a0a0a0"><text x="476.5" y="322.2" font-size="14">適用</text></g>
<g fill="#e6e6e6"><text x="507.5" y="355.3" font-size="14">位置</text></g>
<g fill="#e6e6e6"><text x="507.5" y="380.3" font-size="14">回転</text></g>
<g fill="#e6e6e6"><text x="507.5" y="405.3" font-size="14">スケール</text></g>
<g fill="#e6e6e6"><text x="507.5" y="430.3" font-size="14">全トランスフォーム</text></g>
<g fill="#e6e6e6"><text x="507.5" y="455.3" font-size="14">回転・スケール</text></g>
<g fill="#e6e6e6"><text x="507.5" y="488" font-size="14">位置をデルタ化</text></g>
<g fill="#e6e6e6"><text x="507.5" y="513" font-size="14">回転をデルタ化</text></g>
<g fill="#e6e6e6"><text x="507.5" y="538" font-size="14">スケールをデルタ化</text></g>
<g fill="#e6e6e6"><text x="507.5" y="563" font-size="14">全トランスフォームをデルタ化</text></g>
<g fill="#e6e6e6"><text x="507.5" y="588" font-size="14">トランスフォームアニメーションをデルタ</text><text x="773.5" y="588" font-size="14">(</text><text x="778.16" y="588" font-size="14">差分</text><text x="806.16" y="588" font-size="14">)</text><text x="810.82" y="588" font-size="14">に</text></g>
<g fill="#e6e6e6"><text x="507.5" y="621.3" font-size="14">ビジュアルトランスフォーム</text></g>
<g fill="#e6e6e6"><text x="507.5" y="646.3" font-size="14">表示の形状をメッシュ化</text></g>
<g fill="#e6e6e6"><text x="507.5" y="671.3" font-size="14">インスタンスを実体化</text></g>
<g fill="#e6e6e6"><text x="507.5" y="696.3" font-size="14">親の逆行列</text></g></svg>
<span class="tx" style="left:476.5px;top:309.88px;font-size:14px;width:28px">適用</span><span class="tx" style="left:507.5px;top:342.98px;font-size:14px;width:28px">位置</span><span class="tx" style="left:507.5px;top:367.98px;font-size:14px;width:28px">回転</span><span class="tx" style="left:507.5px;top:392.98px;font-size:14px;width:56px">スケール</span><span class="tx" style="left:507.5px;top:417.98px;font-size:14px;width:126px">全トランスフォーム</span><span class="tx" style="left:507.5px;top:442.98px;font-size:14px;width:98px">回転・スケール</span><span class="tx" style="left:507.5px;top:475.68px;font-size:14px;width:98px">位置をデルタ化</span><span class="tx" style="left:507.5px;top:500.68px;font-size:14px;width:98px">回転をデルタ化</span><span class="tx" style="left:507.5px;top:525.68px;font-size:14px;width:126px">スケールをデルタ化</span><span class="tx" style="left:507.5px;top:550.68px;font-size:14px;width:196px">全トランスフォームをデルタ化</span><span class="tx" style="left:507.5px;top:575.68px;font-size:14px;width:266px">トランスフォームアニメーションをデルタ</span><span class="tx" style="left:778.16px;top:575.68px;font-size:14px;width:28px">差分</span><span class="tx" style="left:810.82px;top:575.68px;font-size:14px;width:14px">に</span><span class="tx" style="left:507.5px;top:608.98px;font-size:14px;width:182px">ビジュアルトランスフォーム</span><span class="tx" style="left:507.5px;top:633.98px;font-size:14px;width:154px">表示の形状をメッシュ化</span><span class="tx" style="left:507.5px;top:658.98px;font-size:14px;width:140px">インスタンスを実体化</span><span class="tx" style="left:507.5px;top:683.98px;font-size:14px;width:70px">親の逆行列</span>
</div>
<div class="sec" id="tooltip">
<div style="left:797px;top:449.8px;width:345.2px;height:39.6px;background:#1d1d1d;border-radius:5px;box-shadow:0 1px 4px rgba(0,0,0,0.4);"></div>
<svg class="ov" width="1920" height="1080" viewBox="0 0 1920 1080"><g fill="#e6e6e6"><text x="811.5" y="475" font-size="14">そのデータへのオブジェクトの変換を適用します</text><text x="1119.5" y="475" font-size="14">.</text></g></svg>
<span class="tx" style="left:811.5px;top:462.68px;font-size:14px;width:308px">そのデータへのオブジェクトの変換を適用します</span>
</div>
<div class="sec" id="timeline">
<div style="left:2px;top:980px;width:1357px;height:75px;background:#1d1d1d;border-radius:5px;"></div>
<div style="left:2px;top:980px;width:1357px;height:31.5px;background:#303030;border-radius:5px 5px 0 0;"></div>
<div style="left:10.5px;top:984.5px;width:39px;height:23.5px;background:#2b2b2b;border-radius:4px;box-shadow:inset 0 0 0 1px #464646;"></div>
<div style="left:57px;top:984.5px;width:59px;height:23.5px;background:#2b2b2b;border-radius:4px 0 0 4px;box-shadow:inset 0 0 0 1px #464646;"></div>
<div style="left:115px;top:984.5px;width:102.5px;height:23.5px;background:#2b2b2b;border-radius:0 4px 4px 0;box-shadow:inset 0 0 0 1px #464646;"></div>
<div style="left:565px;top:984.5px;width:23.5px;height:23.5px;background:#545454;border-radius:4px 0 0 4px;"></div>
<div style="left:589px;top:984.5px;width:24px;height:23.5px;background:#3a3a3a;border-radius:0 4px 4px 0;"></div>
<div style="left:620.5px;top:984.5px;width:24.3px;height:23.5px;background:#545454;border-radius:4px 0 0 4px;"></div>
<div style="left:645.5px;top:984.5px;width:24.3px;height:23.5px;background:#545454;"></div>
<div style="left:670.5px;top:984.5px;width:24.3px;height:23.5px;background:#545454;"></div>
<div style="left:695.5px;top:984.5px;width:24.3px;height:23.5px;background:#545454;"></div>
<div style="left:720.5px;top:984.5px;width:24.3px;height:23.5px;background:#545454;"></div>
<div style="left:745.5px;top:984.5px;width:24.3px;height:23.5px;background:#545454;border-radius:0 4px 4px 0;"></div>
<div style="left:1008px;top:984.5px;width:92px;height:23.5px;background:#545454;border-radius:4px;"></div>
<div style="left:1107.5px;top:984.5px;width:24px;height:23.5px;background:#545454;border-radius:4px 0 0 4px;"></div>
<div style="left:1132.5px;top:984.5px;width:108px;height:23.5px;background:#545454;"></div>
<div style="left:1241.5px;top:984.5px;width:108.5px;height:23.5px;background:#545454;border-radius:0 4px 4px 0;"></div>
<div style="left:11px;top:1040.3px;width:1337.5px;height:11.7px;background:#535353;border-radius:6px;"></div>
<div style="left:36px;top:1015px;width:29.5px;height:21px;background:#4772b3;border-radius:4px;"></div>
<div style="left:49.6px;top:1036px;width:2px;height:18px;background:#4772b3;"></div>
<div style="left:1352px;top:1023px;width:7px;height:31px;background:#303030;border-radius:3px 0 0 3px;"></div>
<svg class="ov" width="1920" height="1080" viewBox="0 0 1920 1080"><path d="M38.2 995.8L41.8 999.5L45.4 995.8" stroke="#d0d0d0" stroke-width="1.5" fill="none" stroke-linecap="round" stroke-linejoin="round"/>
<g transform="translate(25.1,996.6)"><circle r="8.7" fill="#e6e6e6"/><path d="M4.2 -5.6L-0.8 0L3.4 4.2" stroke="#262626" stroke-width="2.2" fill="none" stroke-linejoin="miter"/></g>
<path d="M103.9 995.2L107.5 998.9L111.1 995.2" stroke="#d0d0d0" stroke-width="1.5" fill="none" stroke-linecap="round" stroke-linejoin="round"/>
<path d="M205.9 995.2L209.5 998.9L213.1 995.2" stroke="#d0d0d0" stroke-width="1.5" fill="none" stroke-linecap="round" stroke-linejoin="round"/>
<g fill="#e6e6e6"><text x="65.5" y="1001.3" font-size="14">再生</text></g>
<g fill="#e6e6e6"><text x="125.3" y="1001.3" font-size="14">キーイング</text></g>
<g fill="#e6e6e6"><text x="229.5" y="1001.3" font-size="14">ビュー</text></g>
<g fill="#e6e6e6"><text x="290.5" y="1001.3" font-size="14">マーカー</text></g>
<path d="M596.9 995.2L600.5 998.9L604.1 995.2" stroke="#5c5c5c" stroke-width="1.5" fill="none" stroke-linecap="round" stroke-linejoin="round"/>
<circle cx="576.5" cy="996.3" r="5" fill="#e6e6e6"/>
<path d="M625.9 990.0h2.8v13.2h-2.8ZM629.9 996.6L637.7 991.2V1002ZM646.5 996.6L652.6 990.5L658.7 996.6L652.6 1002.7ZM659.8 996.6L665.8 991.8V1001.4ZM676 996.6L688 989.1V1004.1ZM713.1 996.6L701.1 989.1V1004.1ZM729.3 996.6L723.3 991.8V1001.4ZM730.4 996.6L736.5 990.5L742.6 996.6L736.5 1002.7ZM759.8 996.6L752 991.2V1002ZM760.4 990.0h2.8v13.2h-2.8Z" fill="#e6e6e6"/>
<g transform="translate(1119.4,996.4)"><g stroke="#e6e6e6" stroke-width="1.3" fill="none" stroke-linecap="round"><circle cy="0.6" r="6.6"/><path d="M-2.2 -8H2.2M0 -8V-6M5.2 -5L6.6 -6.4M0 -3.4V0.8H3.2"/></g></g>
<g fill="#e6e6e6"><text x="1048.95" y="1001.4" font-size="14">1</text></g>
<g fill="#e6e6e6"><text x="1151.5" y="1001.3" font-size="14">開始</text></g>
<g fill="#e6e6e6"><text x="1214.45" y="1001.4" font-size="14">1</text></g>
<g fill="#e6e6e6"><text x="1260" y="1001.3" font-size="14">終了</text></g>
<g fill="#e6e6e6"><text x="1305.89" y="1001.4" font-size="14" textLength="25.23" lengthAdjust="spacing">250</text></g>
<g fill="#b4b4b4"><text x="138.42" y="1031" font-size="14" textLength="16.82" lengthAdjust="spacing">20</text></g>
<g fill="#b4b4b4"><text x="239.29" y="1031" font-size="14" textLength="16.82" lengthAdjust="spacing">40</text></g>
<g fill="#b4b4b4"><text x="340.16" y="1031" font-size="14" textLength="16.82" lengthAdjust="spacing">60</text></g>
<g fill="#b4b4b4"><text x="441.03" y="1031" font-size="14" textLength="16.82" lengthAdjust="spacing">80</text></g>
<g fill="#b4b4b4"><text x="537.69" y="1031" font-size="14" textLength="25.23" lengthAdjust="spacing">100</text></g>
<g fill="#b4b4b4"><text x="638.56" y="1031" font-size="14" textLength="25.23" lengthAdjust="spacing">120</text></g>
<g fill="#b4b4b4"><text x="739.43" y="1031" font-size="14" textLength="25.23" lengthAdjust="spacing">140</text></g>
<g fill="#b4b4b4"><text x="840.3" y="1031" font-size="14" textLength="25.23" lengthAdjust="spacing">160</text></g>
<g fill="#b4b4b4"><text x="941.17" y="1031" font-size="14" textLength="25.23" lengthAdjust="spacing">180</text></g>
<g fill="#b4b4b4"><text x="1042.04" y="1031" font-size="14" textLength="25.23" lengthAdjust="spacing">200</text></g>
<g fill="#b4b4b4"><text x="1142.91" y="1031" font-size="14" textLength="25.23" lengthAdjust="spacing">220</text></g>
<g fill="#b4b4b4"><text x="1243.78" y="1031" font-size="14" textLength="25.23" lengthAdjust="spacing">240</text></g>
<circle cx="16.5" cy="1046.2" r="4" fill="#262626" stroke="#6a6a6a" stroke-width="1"/><circle cx="1341.5" cy="1046.2" r="4" fill="#262626" stroke="#6a6a6a" stroke-width="1"/>
<path d="M46.96 1050.5v3.5M97.39 1050.5v3.5M147.83 1050.5v3.5M198.26 1050.5v3.5M248.7 1050.5v3.5M299.13 1050.5v3.5M349.57 1050.5v3.5M400 1050.5v3.5M450.44 1050.5v3.5M500.87 1050.5v3.5M551.31 1050.5v3.5M601.74 1050.5v3.5M652.18 1050.5v3.5M702.61 1050.5v3.5M753.05 1050.5v3.5M803.48 1050.5v3.5M853.92 1050.5v3.5M904.35 1050.5v3.5M954.79 1050.5v3.5M1005.22 1050.5v3.5M1055.66 1050.5v3.5M1106.09 1050.5v3.5M1156.53 1050.5v3.5M1206.96 1050.5v3.5M1257.4 1050.5v3.5M1307.83 1050.5v3.5" stroke="#3a3a3a" stroke-width="1"/>
<g fill="#fff"><text x="46.55" y="1031" font-size="14">1</text></g>
<path d="M2 1033.6L6.6 1038.2L2 1042.8" stroke="#8a8a8a" stroke-width="1.5" fill="none"/>
<path d="M1357 1034.6L1353 1038.4L1357 1042.2" stroke="#8a8a8a" stroke-width="1.3" fill="none"/></svg>
<span class="tx" style="left:65.5px;top:988.98px;font-size:14px;width:28px">再生</span><span class="tx" style="left:125.3px;top:988.98px;font-size:14px;width:70px">キーイング</span><span class="tx" style="left:229.5px;top:988.98px;font-size:14px;width:42px">ビュー</span><span class="tx" style="left:290.5px;top:988.98px;font-size:14px;width:56px">マーカー</span><span class="tx" style="left:1151.5px;top:988.98px;font-size:14px;width:28px">開始</span><span class="tx" style="left:1260px;top:988.98px;font-size:14px;width:28px">終了</span>
</div>
<div class="sec" id="statusbar">
<div style="left:0px;top:1056px;width:1920px;height:24px;background:#181818;"></div>
<svg class="ov" width="1920" height="1080" viewBox="0 0 1920 1080"><g fill="#8c8c8c"><text x="11.5" y="1073.5" font-size="14">[</text></g>
<g fill="#8c8c8c"><text x="16.5" y="1073.6" font-size="14">スペース</text></g>
<g fill="#8c8c8c"><text x="72.5" y="1073.5" font-size="14">]</text></g>
<g fill="#8c8c8c"><text x="77.5" y="1073.6" font-size="14">キーで検索</text></g>
<g fill="#8c8c8c"><text x="147.5" y="1073.5" font-size="14">...</text></g>
<g fill="#8c8c8c"><text x="1870.5" y="1073.4" font-size="14" textLength="33.01" lengthAdjust="spacing">4.0.1</text></g></svg>
<span class="tx" style="left:16.5px;top:1061.28px;font-size:14px;width:56px">スペース</span><span class="tx" style="left:77.5px;top:1061.28px;font-size:14px;width:70px">キーで検索</span>
</div>
<div class="sec" id="scene-sel">
<div style="left:1424.5px;top:33.5px;width:240.5px;height:24px;background:#1d1d1d;border-radius:4px;box-shadow:inset 0 0 0 1px #3d3d3d;"></div>
<div style="left:1425.5px;top:34.5px;width:38.5px;height:22px;background:#282828;border-radius:3px 0 0 3px;"></div>
<div style="left:1614.5px;top:34.5px;width:24.5px;height:22px;background:#545454;"></div>
<div style="left:1639.5px;top:34.5px;width:24.5px;height:22px;background:#2a2a2a;border-radius:0 3px 3px 0;"></div>
<div style="left:1671.5px;top:33.5px;width:240px;height:24px;background:#1d1d1d;border-radius:4px;box-shadow:inset 0 0 0 1px #3d3d3d;"></div>
<div style="left:1672.5px;top:34.5px;width:38px;height:22px;background:#282828;border-radius:3px 0 0 3px;"></div>
<div style="left:1860.5px;top:34.5px;width:24.5px;height:22px;background:#545454;"></div>
<div style="left:1885.5px;top:34.5px;width:25px;height:22px;background:#2a2a2a;border-radius:0 3px 3px 0;"></div>
<svg class="ov" width="1920" height="1080" viewBox="0 0 1920 1080"><path d="M1452.9 44.7L1456.5 48.4L1460.1 44.7" stroke="#d0d0d0" stroke-width="1.5" fill="none" stroke-linecap="round" stroke-linejoin="round"/>
<g transform="translate(1440.6,45.3)"><path d="M-8.6 4.4C-8.6 1 -5.2 -8.8 -4.2 -8.8S0 1 0 4.4C0 6.4 -8.6 6.4 -8.6 4.4Z" fill="#e6e6e6"/><circle cx="5" cy="-5.6" r="2.2" fill="#e6e6e6"/><circle cx="3.4" cy="3.6" r="4.1" fill="#282828" stroke="#e6e6e6" stroke-width="1.3"/><path d="M1.2 2.4A2.6 2.6 0 0 1 3 1" stroke="#e6e6e6" stroke-width="0.9" fill="none"/></g>
<g transform="translate(1601.6,45.6)"><g stroke="#a0a0a0" stroke-width="1.3" fill="none" stroke-linejoin="round" stroke-linecap="round"><path d="M2.6 -8.4L8.4 -2.6L6 -2L3 1L3.4 5L-5 -3.4L-1 -3L2 -6Z"/><path d="M-1.4 1.4L-8 8"/></g></g>
<g transform="translate(1626.6,45.4)"><g stroke="#e6e6e6" stroke-width="1.4" fill="none" stroke-linejoin="round"><path d="M-4 -4.2H-8.2V8H2.6V5.4"/><path d="M-3.8 -8.2H3.4L8 -3.6V5.2H-3.8Z"/><path d="M3.2 -8V-3.4H7.8"/></g></g>
<g fill="#e6e6e6"><text x="1474" y="50" font-size="14" textLength="40.49" lengthAdjust="spacing">Scene</text></g>
<path d="M1698.9 44.7L1702.5 48.4L1706.1 44.7" stroke="#d0d0d0" stroke-width="1.5" fill="none" stroke-linecap="round" stroke-linejoin="round"/>
<g transform="translate(1686.2,45.6)"><g stroke="#e6e6e6" stroke-width="1.2" fill="none"><path d="M-8.4 -3.2V8.4H3.2M-6 -5.6V6H5.6"/></g><rect x="-3.4" y="-8.4" width="11.8" height="11.8" fill="#e6e6e6"/><path d="M-2.2 2.2V0.4L2 -5L4.6 -1.6L5.8 -2.8L7.2 -0.4V2.2Z" fill="#282828"/><circle cx="5.6" cy="-5.8" r="1.1" fill="#282828"/></g>
<g transform="translate(1872.6,45.4)"><g stroke="#e6e6e6" stroke-width="1.4" fill="none" stroke-linejoin="round"><path d="M-4 -4.2H-8.2V8H2.6V5.4"/><path d="M-3.8 -8.2H3.4L8 -3.6V5.2H-3.8Z"/><path d="M3.2 -8V-3.4H7.8"/></g></g>
<g fill="#e6e6e6"><text x="1720" y="50" font-size="14" textLength="69.29" lengthAdjust="spacing">ViewLayer</text></g>
<path d="M1647 41.5l10 10m0 -10l-10 10M1893 41.5l10 10m0 -10l-10 10" stroke="#6a6a6a" stroke-width="1.4" fill="none"/></svg>

</div>
<div class="sec" id="outliner">
<div style="left:1362px;top:62.5px;width:556.5px;height:317px;background:#282828;border-radius:5px;"></div>
<div style="left:1362px;top:121.5px;width:556.5px;height:24.5px;background:#2b2b2b;"></div>
<div style="left:1362px;top:170.5px;width:556.5px;height:24.5px;background:#2b2b2b;"></div>
<div style="left:1362px;top:219.5px;width:556.5px;height:24.5px;background:#2b2b2b;"></div>
<div style="left:1362px;top:268.5px;width:556.5px;height:24.5px;background:#2b2b2b;"></div>
<div style="left:1362px;top:317.5px;width:556.5px;height:24.5px;background:#2b2b2b;"></div>
<div style="left:1362px;top:366.5px;width:556.5px;height:13px;background:#2b2b2b;border-radius:0 0 5px 5px;"></div>
<div style="left:1362px;top:170.2px;width:557.5px;height:24.7px;background:#334d80;"></div>
<div style="left:1372.5px;top:66px;width:39px;height:24px;background:#282828;border-radius:4px;box-shadow:inset 0 0 0 1px #464646;"></div>
<div style="left:1418.5px;top:66px;width:39px;height:24px;background:#282828;border-radius:4px;box-shadow:inset 0 0 0 1px #464646;"></div>
<div style="left:1555.5px;top:66px;width:143px;height:24px;background:#1d1d1d;border-radius:4px;box-shadow:inset 0 0 0 1px #3d3d3d;"></div>
<div style="left:1838.5px;top:66px;width:39px;height:24px;background:#282828;border-radius:4px;box-shadow:inset 0 0 0 1px #464646;"></div>
<div style="left:1884.5px;top:66px;width:24px;height:24px;background:#545454;border-radius:4px;"></div>
<div style="left:1412.5px;top:122.5px;width:24px;height:22.5px;background:#565656;border-radius:4px;box-shadow:inset 0 0 0 1px #6a6a6a;"></div>
<div style="left:1437.5px;top:172px;width:24px;height:21px;background:rgba(255,255,255,0.22);border-radius:4px;box-shadow:inset 0 0 0 1px rgba(255,255,255,0.25);"></div>
<svg class="ov" width="1920" height="1080" viewBox="0 0 1920 1080"><path d="M1399.9 76.7L1403.5 80.4L1407.1 76.7" stroke="#d0d0d0" stroke-width="1.5" fill="none" stroke-linecap="round" stroke-linejoin="round"/>
<g transform="translate(1386.8,78.6)"><rect x="-8.6" y="-8.4" width="6.6" height="3.2" fill="#e6e6e6"/><path d="M-5.4 -5.2V6.6H-1M-5.4 0H-1" stroke="#e6e6e6" stroke-width="1.1" fill="none"/><rect x="0.8" y="-1.9" width="8.3" height="3.9" fill="#e6e6e6"/><rect x="0.8" y="4.4" width="8.3" height="3.9" fill="#e6e6e6"/></g>
<path d="M1445.9 76.7L1449.5 80.4L1453.1 76.7" stroke="#d0d0d0" stroke-width="1.5" fill="none" stroke-linecap="round" stroke-linejoin="round"/>
<g transform="translate(1433.6,78.3)"><g stroke="#e6e6e6" stroke-width="1.2" fill="none"><path d="M-8.4 -3.2V8.4H3.2M-6 -5.6V6H5.6"/></g><rect x="-3.4" y="-8.4" width="11.8" height="11.8" fill="#e6e6e6"/><path d="M-2.2 2.2V0.4L2 -5L4.6 -1.6L5.8 -2.8L7.2 -0.4V2.2Z" fill="#282828"/><circle cx="5.6" cy="-5.8" r="1.1" fill="#282828"/></g>
<path d="M1865.9 76.7L1869.5 80.4L1873.1 76.7" stroke="#d0d0d0" stroke-width="1.5" fill="none" stroke-linecap="round" stroke-linejoin="round"/>
<g transform="translate(1850.3,77.8)"><path d="M-8.4 -7.4H8.4L2 0.6V7.4L-2 5.2V0.6Z" fill="none" stroke="#e6e6e6" stroke-width="1.4" stroke-linejoin="round"/></g>
<g transform="translate(1896.6,78.4)"><g stroke="#dcdcdc" stroke-width="1.2" fill="none"><path d="M-8.6 -2.6V-5.8H2"/><path d="M-7.4 -2.4V7.6H5.6V2"/><path d="M-3 1.2H1"/></g><circle cx="5.4" cy="-4.8" r="4.6" fill="#dcdcdc"/><path d="M2.8 -4.8H8M5.4 -7.4V-2.2" stroke="#545454" stroke-width="1.5"/></g>
<g transform="translate(1568.8,79.6)"><circle cx="3.2" cy="-3" r="5.6" fill="none" stroke="#d8d8d8" stroke-width="1.6"/><path d="M-0.8 1.2L-7 7" stroke="#d8d8d8" stroke-width="1.8" stroke-linecap="round"/></g>
<g fill="#e6e6e6"><text x="1417.5" y="114.6" font-size="14">シーンコレクション</text></g>
<g transform="translate(1399.6,108.1)"><rect x="-8.4" y="-7.6" width="16.8" height="4.4" fill="#e6e6e6"/><rect x="-7.3" y="-2.2" width="14.6" height="9.8" fill="#e6e6e6"/><rect x="-2.6" y="0" width="5.2" height="1.6" rx="0.8" fill="#282828"/></g>
<g fill="#e6e6e6"><text x="1442.3" y="138.6" font-size="14" textLength="64.86" lengthAdjust="spacing">Collection</text></g>
<g transform="translate(1424.5,133)"><rect x="-8.4" y="-7.6" width="16.8" height="4.4" fill="#e6e6e6"/><rect x="-7.3" y="-2.2" width="14.6" height="9.8" fill="#e6e6e6"/><rect x="-2.6" y="0" width="5.2" height="1.6" rx="0.8" fill="#565656"/></g>
<g fill="#e6e6e6"><text x="1467.7" y="163.3" font-size="14">ベジエカーブ</text></g>
<g transform="translate(1449.6,157.6)"><path d="M-3.6 -6.4C10.5 -9 10.5 7 -7 6.2" stroke="#d48b4c" stroke-width="3" fill="none" stroke-linecap="round"/></g>
<g transform="translate(1589.4,158)"><path d="M-3 -6.2C9.5 -8 10 6 -6 6.2" stroke="#17c9a0" stroke-width="1.3" fill="none"/><rect x="-5.8" y="-8.2" width="3.8" height="3.8" fill="none" stroke="#17c9a0" stroke-width="1.2"/><rect x="-9" y="4.2" width="3.8" height="3.8" fill="none" stroke="#17c9a0" stroke-width="1.2"/></g>
<g fill="#ffaf3e"><text x="1467.7" y="188.2" font-size="14">立方体</text></g>
<g transform="translate(1449.8,181.6)"><path d="M-6.6 -6.2H6.6L0 6.4Z" stroke="#e38d4a" stroke-width="2.7" fill="none" stroke-linejoin="miter"/></g>
<g transform="translate(1546.8,182.8)"><path d="M8.2 -4.4A5 5 0 0 1 1.6 0.8L-5 7.4A1.9 1.9 0 0 1 -7.6 4.8L-1 -1.8A5 5 0 0 1 4.2 -8.4L1.2 -5.2L2.2 -2.4L5 -1.4Z" fill="none" stroke="#6295ee" stroke-width="1.4" stroke-linejoin="round"/></g>
<g transform="translate(1571.6,182.8)"><g stroke="#17c9a0" stroke-width="1.3" fill="none"><path d="M-4.2 -6H4.2M-5.4 -3.8L-1.4 4.4M5.4 -3.8L1.4 4.4"/><rect x="-8.2" y="-8" width="4" height="4"/><rect x="4.2" y="-8" width="4" height="4"/><rect x="-2" y="4.2" width="4" height="4"/></g></g>
<path d="M1398.5 150.5V188" stroke="#4a4a4a" stroke-width="1"/>
<g transform="translate(1845.6,132.6)"><rect x="-6.6" y="-6.4" width="13.2" height="12.8" rx="2" fill="#e6e6e6"/><path d="M-3.8 0.2L-1 3L4.2 -2.8" stroke="#222" stroke-width="2" fill="none"/></g>
<g transform="translate(1870,132.4)"><path d="M-8.2 0C-4.4 -7 4.4 -7 8.2 0C4.4 7 -4.4 7 -8.2 0Z" fill="#e6e6e6"/><circle r="3.6" fill="#2b2b2b"/><circle r="1.7" fill="#e6e6e6"/></g>
<g transform="translate(1895,132.4)"><path d="M-8.2 -4.2H-4.2L-2.8 -6.8H2.8L4.2 -4.2H8.2V6.8H-8.2Z" fill="#e6e6e6"/><circle cy="1" r="4.4" fill="#2b2b2b"/><circle cy="1" r="2.9" fill="none" stroke="#e6e6e6" stroke-width="1.1"/></g>
<g transform="translate(1870,157.2)"><path d="M-8.2 0C-4.4 -7 4.4 -7 8.2 0C4.4 7 -4.4 7 -8.2 0Z" fill="#e6e6e6"/><circle r="3.6" fill="#282828"/><circle r="1.7" fill="#e6e6e6"/></g>
<g transform="translate(1895,157.2)"><path d="M-8.2 -4.2H-4.2L-2.8 -6.8H2.8L4.2 -4.2H8.2V6.8H-8.2Z" fill="#e6e6e6"/><circle cy="1" r="4.4" fill="#282828"/><circle cy="1" r="2.9" fill="none" stroke="#e6e6e6" stroke-width="1.1"/></g>
<g transform="translate(1870,182)"><path d="M-8.2 0C-4.4 -7 4.4 -7 8.2 0C4.4 7 -4.4 7 -8.2 0Z" fill="#e6e6e6"/><circle r="3.6" fill="#334d80"/><circle r="1.7" fill="#e6e6e6"/></g>
<g transform="translate(1895,182)"><path d="M-8.2 -4.2H-4.2L-2.8 -6.8H2.8L4.2 -4.2H8.2V6.8H-8.2Z" fill="#e6e6e6"/><circle cy="1" r="4.4" fill="#334d80"/><circle cy="1" r="2.9" fill="none" stroke="#e6e6e6" stroke-width="1.1"/></g>
<path d="M1395.2 130.5h8l-4 6.5z M1420.8 154l6.8 4l-6.8 4z M1420.8 179l6.8 4l-6.8 4z" fill="#c0c0c0"/></svg>
<span class="tx" style="left:1417.5px;top:102.28px;font-size:14px;width:126px">シーンコレクション</span><span class="tx" style="left:1467.7px;top:150.98px;font-size:14px;width:84px">ベジエカーブ</span><span class="tx" style="left:1467.7px;top:175.88px;font-size:14px;width:42px">立方体</span>
</div>
<div class="sec" id="properties">
<div style="left:1362px;top:383px;width:556.5px;height:671px;background:#303030;border-radius:5px;"></div>
<div style="left:1362px;top:414px;width:35px;height:640px;background:#1d1d1d;border-radius:0 0 0 5px;"></div>
<div style="left:1363.5px;top:414px;width:33.5px;height:45px;background:#262626;border-radius:0 0 0 5px;"></div>
<div style="left:1363.5px;top:463px;width:33.5px;height:182.5px;background:#222222;border-radius:0 0 0 5px;"></div>
<div style="left:1363.5px;top:650px;width:33.5px;height:42px;background:#222222;border-radius:0 0 0 5px;"></div>
<div style="left:1363.5px;top:731px;width:33.5px;height:210.5px;background:#222222;border-radius:0 0 0 5px;"></div>
<div style="left:1363.5px;top:946px;width:33.5px;height:43px;background:#222222;border-radius:0 0 0 5px;"></div>
<div style="left:1363.5px;top:696px;width:34px;height:35px;background:#303030;border-radius:5px 0 0 5px;"></div>
<div style="left:1372.5px;top:387px;width:39px;height:23.5px;background:#2b2b2b;border-radius:4px;box-shadow:inset 0 0 0 1px #464646;"></div>
<div style="left:1570.5px;top:387px;width:143px;height:23.5px;background:#1d1d1d;border-radius:4px;box-shadow:inset 0 0 0 1px #3d3d3d;"></div>
<div style="left:1884.5px;top:387px;width:24px;height:23.5px;background:#2b2b2b;border-radius:4px;box-shadow:inset 0 0 0 1px #464646;"></div>
<div style="left:1407.5px;top:469.3px;width:502px;height:23.4px;background:#1d1d1d;border-radius:4px;box-shadow:inset 0 0 0 1px #333;"></div>
<div style="left:1407.5px;top:469.3px;width:39px;height:23.4px;background:#2a2a2a;border-radius:4px 0 0 4px;box-shadow:inset 0 0 0 1px #3e3e3e;"></div>
<div style="left:1912px;top:426.5px;width:4.8px;height:559px;background:#424242;border-radius:3px;"></div>
<div style="left:1407.5px;top:505.5px;width:502.5px;height:350.5px;background:#3d3d3d;border-radius:5px;"></div>
<div style="left:1607px;top:547.5px;width:242.5px;height:23.5px;background:#545454;border-radius:4px 4px 0 0;"></div>
<div style="left:1607px;top:572.5px;width:242.5px;height:23.5px;background:#545454;"></div>
<div style="left:1607px;top:597.5px;width:242.5px;height:23.5px;background:#545454;border-radius:0 0 4px 4px;"></div>
<div style="left:1607px;top:628.5px;width:242.5px;height:23.5px;background:#545454;border-radius:4px 4px 0 0;"></div>
<div style="left:1607px;top:653.5px;width:242.5px;height:23.5px;background:#545454;"></div>
<div style="left:1607px;top:678.5px;width:242.5px;height:23.5px;background:#545454;border-radius:0 0 4px 4px;"></div>
<div style="left:1607px;top:710.3px;width:242.5px;height:22.8px;background:#282828;border-radius:4px;box-shadow:inset 0 0 0 1px #333;"></div>
<div style="left:1607px;top:741px;width:242.5px;height:23.5px;background:#545454;border-radius:4px 4px 0 0;"></div>
<div style="left:1607px;top:766px;width:242.5px;height:23.5px;background:#545454;"></div>
<div style="left:1607px;top:791px;width:242.5px;height:23.5px;background:#545454;border-radius:0 0 4px 4px;"></div>
<div style="left:1407.5px;top:858.5px;width:502.5px;height:30px;background:#3d3d3d;border-radius:5px;"></div>
<div style="left:1407.5px;top:891.5px;width:502.5px;height:30px;background:#3d3d3d;border-radius:5px;"></div>
<div style="left:1407.5px;top:924.5px;width:502.5px;height:30px;background:#3d3d3d;border-radius:5px;"></div>
<div style="left:1407.5px;top:957.5px;width:502.5px;height:30px;background:#3d3d3d;border-radius:5px;"></div>
<div style="left:1407.5px;top:990.5px;width:502.5px;height:30px;background:#3d3d3d;border-radius:5px;"></div>
<div style="left:1407.5px;top:1023.5px;width:502.5px;height:30px;background:#3d3d3d;border-radius:5px;"></div>
<svg class="ov" width="1920" height="1080" viewBox="0 0 1920 1080"><path d="M1399.9 397.7L1403.5 401.4L1407.1 397.7" stroke="#d0d0d0" stroke-width="1.5" fill="none" stroke-linecap="round" stroke-linejoin="round"/>
<g transform="translate(1386.6,398.6)"><rect x="-8" y="-7.6" width="16" height="6.6" rx="3.3" fill="#e6e6e6"/><circle cx="4.4" cy="-4.3" r="2" fill="#2b2b2b"/><rect x="-8" y="1" width="16" height="6.6" rx="3.3" fill="#e6e6e6"/><circle cx="4.4" cy="4.3" r="2" fill="#2b2b2b"/><rect x="-6.6" y="2.4" width="9" height="3.8" rx="1.9" fill="#e6e6e6"/></g>
<g transform="translate(1583.6,400.2)"><circle cx="3.2" cy="-3" r="5.6" fill="none" stroke="#d8d8d8" stroke-width="1.6"/><path d="M-0.8 1.2L-7 7" stroke="#d8d8d8" stroke-width="1.8" stroke-linecap="round"/></g>
<path d="M1892.9 397.7L1896.5 401.4L1900.1 397.7" stroke="#d0d0d0" stroke-width="1.5" fill="none" stroke-linecap="round" stroke-linejoin="round"/>
<g fill="#e6e6e6"><text x="1439.5" y="442" font-size="14">立方体</text></g>
<g transform="translate(1419.7,436.3)"><path d="M-8.7 -5.1V-8.7H-5.1M5.1 -8.7H8.7V-5.1M8.7 5.1V8.7H5.1M-5.1 8.7H-8.7V5.1" stroke="#c8c8c8" stroke-width="1.15" fill="none" opacity="0.85"/><rect x="-5.1" y="-5.1" width="10.2" height="10.2" fill="#e6e6e6"/></g>
<g transform="translate(1897.4,436.6)"><g stroke="#a0a0a0" stroke-width="1.3" fill="none" stroke-linejoin="round" stroke-linecap="round"><path d="M2.6 -8.4L8.4 -2.6L6 -2L3 1L3.4 5L-5 -3.4L-1 -3L2 -6Z"/><path d="M-1.4 1.4L-8 8"/></g></g>
<path d="M1436.76 480.88L1440 484.21L1443.24 480.88" stroke="#d0d0d0" stroke-width="1.5" fill="none" stroke-linecap="round" stroke-linejoin="round"/>
<g transform="translate(1421.8,481.5)"><path d="M-8.7 -5.1V-8.7H-5.1M5.1 -8.7H8.7V-5.1M8.7 5.1V8.7H5.1M-5.1 8.7H-8.7V5.1" stroke="#c8c8c8" stroke-width="1.15" fill="none" opacity="0.85"/><rect x="-5.1" y="-5.1" width="10.2" height="10.2" fill="#e6e6e6"/></g>
<g fill="#e6e6e6"><text x="1457" y="486.7" font-size="14">立方体</text></g>
<g transform="translate(1380.5,441.5)"><path d="M-6.6 -8.4V-1.6" stroke="#a6a6a6" stroke-width="1.6"/><path d="M-8.8 0.6H-4.4V6.4A2.2 2.2 0 0 1 -8.8 6.4Z" fill="#a6a6a6"/><path d="M2.2 -8.2V-4L4.8 -2.6L7.4 -4V-8.2" stroke="#a6a6a6" stroke-width="1.8" fill="none" stroke-linejoin="round"/><path d="M4.8 -3V7" stroke="#a6a6a6" stroke-width="2.6" stroke-linecap="round"/></g>
<g transform="translate(1380.5,485)"><path d="M-8.6 -4.6H-5L-3.6 -7.6H1.6L3 -4.6H8.6V8H-8.6Z" fill="#a6a6a6"/><rect x="-6.6" y="-2.2" width="9.6" height="7.8" fill="#1d1d1d"/><path d="M-6.6 -0.2H3M-6.6 1.8H3M-6.6 3.8H3" stroke="#a6a6a6" stroke-width="0.9"/><circle cx="6" cy="-0.8" r="1.2" fill="#1d1d1d"/><circle cx="6" cy="4" r="1.2" fill="#1d1d1d"/><rect x="4.6" y="-8" width="3" height="1.4" fill="#a6a6a6"/></g>
<g transform="translate(1380.5,520.7)"><path d="M-8.6 -8.2H8.6V-1H6V-3.4H-6V-1H-8.6Z" fill="#a6a6a6"/><rect x="-5.2" y="-2.4" width="10.4" height="10.8" fill="#7a7a7a"/><path d="M-3.4 6L-0.4 1.2L1.4 3.6L2.4 2.6L4 6Z" fill="#1d1d1d"/><circle cx="2.6" cy="0" r="0.9" fill="#1d1d1d"/></g>
<g transform="translate(1380.5,555.5)"><g stroke="#a6a6a6" stroke-width="1.2" fill="none"><path d="M-8.4 -3.2V8.4H3.2M-6 -5.6V6H5.6"/></g><rect x="-3.4" y="-8.4" width="11.8" height="11.8" fill="#a6a6a6"/><path d="M-2.2 2.2V0.4L2 -5L4.6 -1.6L5.8 -2.8L7.2 -0.4V2.2Z" fill="#1d1d1d"/><circle cx="5.6" cy="-5.8" r="1.1" fill="#1d1d1d"/></g>
<g transform="translate(1380.5,590.3)"><path d="M-8.6 4.4C-8.6 1 -5.2 -8.8 -4.2 -8.8S0 1 0 4.4C0 6.4 -8.6 6.4 -8.6 4.4Z" fill="#a6a6a6"/><circle cx="5" cy="-5.6" r="2.2" fill="#a6a6a6"/><circle cx="3.4" cy="3.6" r="4.1" fill="#1d1d1d" stroke="#a6a6a6" stroke-width="1.3"/><path d="M1.2 2.4A2.6 2.6 0 0 1 3 1" stroke="#a6a6a6" stroke-width="0.9" fill="none"/></g>
<g transform="translate(1380.5,625.1)"><circle r="7.8" fill="none" stroke="#c2626c" stroke-width="1.3"/><path d="M-8.8 8.2L-5.6 5.2M5.6 -5.6L8.8 -8.6" stroke="#c2626c" stroke-width="1.2"/><path d="M-3.4 -5.6L0.6 -6.4L2 -3.4L-0.6 -1.6L-2.6 -2.2L-5 0.2L-5.6 -2.6ZM1.2 0.2L4.8 1L4.2 4.6L1.6 5.8L0 3.2Z" fill="#c2626c"/></g>
<g transform="translate(1380.5,669.8)"><g stroke="#e6e6e6" stroke-width="1.3" fill="none"><rect x="-8.1" y="-7.7" width="16.2" height="4.2"/><path d="M-7 -3.3V7.6H7V-3.3"/></g><rect x="-2.4" y="0.2" width="4.8" height="2.2" rx="1.1" fill="#e6e6e6"/></g>
<g transform="translate(1380.5,713.3)"><path d="M-8.7 -5.1V-8.7H-5.1M5.1 -8.7H8.7V-5.1M8.7 5.1V8.7H5.1M-5.1 8.7H-8.7V5.1" stroke="#e9964c" stroke-width="1.15" fill="none" opacity="0.85"/><rect x="-5.1" y="-5.1" width="10.2" height="10.2" fill="#e9964c"/></g>
<g transform="translate(1380.5,784)"><path d="M-5.6 -6H6.6M-5.6 -6V6M-5.6 -6L6 5.6" stroke="#5e8ad8" stroke-width="1.2"/><circle cx="-5.6" cy="-6" r="3" fill="#5e8ad8"/><circle cx="6.8" cy="-6.2" r="1.6" fill="#5e8ad8"/><circle cx="-5.6" cy="6" r="1.9" fill="#5e8ad8"/><circle cx="6.2" cy="5.6" r="2.3" fill="#5e8ad8"/></g>
<g transform="translate(1380.5,818.6)"><path d="M3.4 -7.4A8 8 0 1 0 7.4 3.4" stroke="#5e8ad8" stroke-width="1.2" fill="none"/><circle r="3.7" fill="#5e8ad8"/><circle cx="6.2" cy="-6.4" r="2.1" fill="#5e8ad8"/></g>
<g transform="translate(1380.5,853.7)"><path d="M8 -7.8C9.6 -8.2 8.6 -3 6.4 1.4A7.8 7.8 0 1 1 -3.4 -5.4C1 -7.4 6.4 -8.2 8 -7.8Z" stroke="#5e8ad8" stroke-width="1.3" fill="none"/><circle cx="-1.6" cy="1.6" r="4.2" stroke="#5e8ad8" stroke-width="1.5" fill="none"/><circle cx="-1.6" cy="1.6" r="1.5" fill="#5e8ad8"/><circle cx="5" cy="-4.8" r="1.1" fill="#5e8ad8"/></g>
<g transform="translate(1380.5,923.3)"><circle r="8" fill="#c2626c"/><path d="M0 0V-8A8 8 0 0 1 7.8 -1.8Z" fill="#1d1d1d"/><path d="M0 0V6.4A7 7 0 0 1 -6.8 2Z" fill="#1d1d1d"/><circle r="8" fill="none" stroke="#c2626c" stroke-width="1.2"/></g>
<g transform="translate(1380.5,967.5)"><rect x="-8.4" y="-8.4" width="16.8" height="16.8" fill="#c2626c"/><rect x="-8.4" y="-4.2" width="4.2" height="4.2" fill="#1d1d1d"/><rect x="-8.4" y="4.2" width="4.2" height="4.2" fill="#1d1d1d"/><rect x="-4.2" y="-8.4" width="4.2" height="4.2" fill="#1d1d1d"/><rect x="-4.2" y="0" width="4.2" height="4.2" fill="#1d1d1d"/><rect x="0" y="-4.2" width="4.2" height="4.2" fill="#1d1d1d"/><rect x="0" y="4.2" width="4.2" height="4.2" fill="#1d1d1d"/><rect x="4.2" y="-8.4" width="4.2" height="4.2" fill="#1d1d1d"/><rect x="4.2" y="0" width="4.2" height="4.2" fill="#1d1d1d"/><rect x="-8.4" y="-8.4" width="16.8" height="16.8" fill="none" stroke="#c2626c" stroke-width="0.8"/></g>
<g transform="translate(1380.5,748.5)"><path d="M8.2 -4.4A5 5 0 0 1 1.6 0.8L-5 7.4A1.9 1.9 0 0 1 -7.6 4.8L-1 -1.8A5 5 0 0 1 4.2 -8.4L1.2 -5.2L2.2 -2.4L5 -1.4Z" fill="#5e8ad8" stroke="#5e8ad8" stroke-width="0.8" stroke-linejoin="round"/></g>
<g transform="translate(1380.5,888.6)"><g stroke="#14c7a0" stroke-width="1.3" fill="none"><path d="M-4.2 -6H4.2M-5.4 -3.8L-1.4 4.4M5.4 -3.8L1.4 4.4"/><rect x="-8.2" y="-8" width="4" height="4"/><rect x="4.2" y="-8" width="4" height="4"/><rect x="-2" y="4.2" width="4" height="4"/></g></g>
<path d="M1418.7 519.2L1423.2 524.0L1427.7 519.2" stroke="#c8c8c8" stroke-width="1.3" fill="none" stroke-linecap="round" stroke-linejoin="round"/>
<g fill="#e6e6e6"><text x="1434.6" y="527" font-size="14">トランスフォーム</text></g>
<g fill="#8a8a8a"><rect x="1886.8" y="518.5" width="1.9" height="1.9"/><rect x="1886.8" y="522.1" width="1.9" height="1.9"/><rect x="1890.5" y="518.5" width="1.9" height="1.9"/><rect x="1890.5" y="522.1" width="1.9" height="1.9"/><rect x="1894.2" y="518.5" width="1.9" height="1.9"/><rect x="1894.2" y="522.1" width="1.9" height="1.9"/></g>
<g fill="#e6e6e6"><text x="1585.49" y="563.3" font-size="14">X</text></g>
<g fill="#e6e6e6"><text x="1552.99" y="563.4" font-size="14">位置</text></g>
<g fill="#e6e6e6"><text x="1715.63" y="563.3" font-size="14">0 m</text></g>
<g transform="translate(1853,550.7)" fill="none" stroke="#bdbdbd" stroke-width="1.25"><path d="M0.8 7.8V5.2a3.6 3.6 0 0 1 7.2 -0.4"/><rect x="5.2" y="7.6" width="11.3" height="8" rx="0.8"/><rect x="9.8" y="10.3" width="2.2" height="2.6" fill="#bdbdbd" stroke="none"/></g>
<circle cx="1887.6" cy="559.5" r="2.5" fill="#e0e0e0"/>
<g fill="#e6e6e6"><text x="1585.49" y="588.3" font-size="14">Y</text></g>
<g fill="#e6e6e6"><text x="1715.63" y="588.3" font-size="14">0 m</text></g>
<g transform="translate(1853,575.7)" fill="none" stroke="#bdbdbd" stroke-width="1.25"><path d="M0.8 7.8V5.2a3.6 3.6 0 0 1 7.2 -0.4"/><rect x="5.2" y="7.6" width="11.3" height="8" rx="0.8"/><rect x="9.8" y="10.3" width="2.2" height="2.6" fill="#bdbdbd" stroke="none"/></g>
<circle cx="1887.6" cy="584.5" r="2.5" fill="#e0e0e0"/>
<g fill="#e6e6e6"><text x="1586.31" y="613.3" font-size="14">Z</text></g>
<g fill="#e6e6e6"><text x="1715.63" y="613.3" font-size="14">0 m</text></g>
<g transform="translate(1853,600.7)" fill="none" stroke="#bdbdbd" stroke-width="1.25"><path d="M0.8 7.8V5.2a3.6 3.6 0 0 1 7.2 -0.4"/><rect x="5.2" y="7.6" width="11.3" height="8" rx="0.8"/><rect x="9.8" y="10.3" width="2.2" height="2.6" fill="#bdbdbd" stroke="none"/></g>
<circle cx="1887.6" cy="609.5" r="2.5" fill="#e0e0e0"/>
<g fill="#e6e6e6"><text x="1585.49" y="644.3" font-size="14">X</text></g>
<g fill="#e6e6e6"><text x="1552.99" y="644.4" font-size="14">回転</text></g>
<g fill="#e6e6e6"><text x="1720.07" y="644.3" font-size="14" textLength="14.46" lengthAdjust="spacing">0°</text></g>
<g transform="translate(1853,631.7)" fill="none" stroke="#bdbdbd" stroke-width="1.25"><path d="M0.8 7.8V5.2a3.6 3.6 0 0 1 7.2 -0.4"/><rect x="5.2" y="7.6" width="11.3" height="8" rx="0.8"/><rect x="9.8" y="10.3" width="2.2" height="2.6" fill="#bdbdbd" stroke="none"/></g>
<circle cx="1887.6" cy="640.5" r="2.5" fill="#e0e0e0"/>
<g fill="#e6e6e6"><text x="1585.49" y="669.3" font-size="14">Y</text></g>
<g fill="#e6e6e6"><text x="1720.07" y="669.3" font-size="14" textLength="14.46" lengthAdjust="spacing">0°</text></g>
<g transform="translate(1853,656.7)" fill="none" stroke="#bdbdbd" stroke-width="1.25"><path d="M0.8 7.8V5.2a3.6 3.6 0 0 1 7.2 -0.4"/><rect x="5.2" y="7.6" width="11.3" height="8" rx="0.8"/><rect x="9.8" y="10.3" width="2.2" height="2.6" fill="#bdbdbd" stroke="none"/></g>
<circle cx="1887.6" cy="665.5" r="2.5" fill="#e0e0e0"/>
<g fill="#e6e6e6"><text x="1586.31" y="694.3" font-size="14">Z</text></g>
<g fill="#e6e6e6"><text x="1720.07" y="694.3" font-size="14" textLength="14.46" lengthAdjust="spacing">0°</text></g>
<g transform="translate(1853,681.7)" fill="none" stroke="#bdbdbd" stroke-width="1.25"><path d="M0.8 7.8V5.2a3.6 3.6 0 0 1 7.2 -0.4"/><rect x="5.2" y="7.6" width="11.3" height="8" rx="0.8"/><rect x="9.8" y="10.3" width="2.2" height="2.6" fill="#bdbdbd" stroke="none"/></g>
<circle cx="1887.6" cy="690.5" r="2.5" fill="#e0e0e0"/>
<g fill="#e6e6e6"><text x="1551.8" y="726.6" font-size="14">モード</text></g>
<g fill="#e6e6e6"><text x="1616" y="726.6" font-size="14" textLength="28.86" lengthAdjust="spacing">XYZ</text></g>
<g fill="#e6e6e6"><text x="1648" y="726.6" font-size="14">オイラー角</text></g>
<path d="M1837.4 720.5L1841 724.2L1844.6 720.5" stroke="#d0d0d0" stroke-width="1.5" fill="none" stroke-linecap="round" stroke-linejoin="round"/>
<circle cx="1887.6" cy="721.8" r="2.5" fill="#e0e0e0"/>
<g fill="#e6e6e6"><text x="1585.49" y="756.8" font-size="14">X</text></g>
<g fill="#e6e6e6"><text x="1524.99" y="756.9" font-size="14">スケール</text></g>
<g fill="#e6e6e6"><text x="1708.38" y="756.8" font-size="14" textLength="37.84" lengthAdjust="spacing">1.000</text></g>
<g transform="translate(1853,744.2)" fill="none" stroke="#bdbdbd" stroke-width="1.25"><path d="M0.8 7.8V5.2a3.6 3.6 0 0 1 7.2 -0.4"/><rect x="5.2" y="7.6" width="11.3" height="8" rx="0.8"/><rect x="9.8" y="10.3" width="2.2" height="2.6" fill="#bdbdbd" stroke="none"/></g>
<circle cx="1887.6" cy="753" r="2.5" fill="#e0e0e0"/>
<g fill="#e6e6e6"><text x="1585.49" y="781.8" font-size="14">Y</text></g>
<g fill="#e6e6e6"><text x="1708.38" y="781.8" font-size="14" textLength="37.84" lengthAdjust="spacing">1.000</text></g>
<g transform="translate(1853,769.2)" fill="none" stroke="#bdbdbd" stroke-width="1.25"><path d="M0.8 7.8V5.2a3.6 3.6 0 0 1 7.2 -0.4"/><rect x="5.2" y="7.6" width="11.3" height="8" rx="0.8"/><rect x="9.8" y="10.3" width="2.2" height="2.6" fill="#bdbdbd" stroke="none"/></g>
<circle cx="1887.6" cy="778" r="2.5" fill="#e0e0e0"/>
<g fill="#e6e6e6"><text x="1586.31" y="806.8" font-size="14">Z</text></g>
<g fill="#e6e6e6"><text x="1708.38" y="806.8" font-size="14" textLength="37.84" lengthAdjust="spacing">1.000</text></g>
<g transform="translate(1853,794.2)" fill="none" stroke="#bdbdbd" stroke-width="1.25"><path d="M0.8 7.8V5.2a3.6 3.6 0 0 1 7.2 -0.4"/><rect x="5.2" y="7.6" width="11.3" height="8" rx="0.8"/><rect x="9.8" y="10.3" width="2.2" height="2.6" fill="#bdbdbd" stroke="none"/></g>
<circle cx="1887.6" cy="803" r="2.5" fill="#e0e0e0"/>
<path d="M1438.3 836.5L1443.1999999999998 841.3L1438.3 846.0999999999999" stroke="#c8c8c8" stroke-width="1.3" fill="none" stroke-linecap="round" stroke-linejoin="round"/>
<g fill="#e6e6e6"><text x="1452" y="846.8" font-size="14">デルタトランスフォーム</text></g>
<path d="M1421.1000000000001 869.0L1426.0 873.8L1421.1000000000001 878.5999999999999" stroke="#c8c8c8" stroke-width="1.3" fill="none" stroke-linecap="round" stroke-linejoin="round"/>
<g fill="#e6e6e6"><text x="1434.5" y="879.3" font-size="14">関係</text></g>
<g fill="#8a8a8a"><rect x="1887" y="870.8" width="1.9" height="1.9"/><rect x="1887" y="874.4" width="1.9" height="1.9"/><rect x="1890.7" y="870.8" width="1.9" height="1.9"/><rect x="1890.7" y="874.4" width="1.9" height="1.9"/><rect x="1894.4" y="870.8" width="1.9" height="1.9"/><rect x="1894.4" y="874.4" width="1.9" height="1.9"/><rect x="1898.1" y="870.8" width="1.9" height="1.9"/><rect x="1898.1" y="874.4" width="1.9" height="1.9"/></g>
<path d="M1421.1000000000001 902.0L1426.0 906.8L1421.1000000000001 911.5999999999999" stroke="#c8c8c8" stroke-width="1.3" fill="none" stroke-linecap="round" stroke-linejoin="round"/>
<g fill="#e6e6e6"><text x="1434.5" y="912.3" font-size="14">コレクション</text></g>
<g fill="#8a8a8a"><rect x="1887" y="903.8" width="1.9" height="1.9"/><rect x="1887" y="907.4" width="1.9" height="1.9"/><rect x="1890.7" y="903.8" width="1.9" height="1.9"/><rect x="1890.7" y="907.4" width="1.9" height="1.9"/><rect x="1894.4" y="903.8" width="1.9" height="1.9"/><rect x="1894.4" y="907.4" width="1.9" height="1.9"/><rect x="1898.1" y="903.8" width="1.9" height="1.9"/><rect x="1898.1" y="907.4" width="1.9" height="1.9"/></g>
<path d="M1421.1000000000001 935.0L1426.0 939.8L1421.1000000000001 944.5999999999999" stroke="#c8c8c8" stroke-width="1.3" fill="none" stroke-linecap="round" stroke-linejoin="round"/>
<g fill="#e6e6e6"><text x="1434.5" y="945.3" font-size="14">インスタンス化</text></g>
<g fill="#8a8a8a"><rect x="1887" y="936.8" width="1.9" height="1.9"/><rect x="1887" y="940.4" width="1.9" height="1.9"/><rect x="1890.7" y="936.8" width="1.9" height="1.9"/><rect x="1890.7" y="940.4" width="1.9" height="1.9"/><rect x="1894.4" y="936.8" width="1.9" height="1.9"/><rect x="1894.4" y="940.4" width="1.9" height="1.9"/><rect x="1898.1" y="936.8" width="1.9" height="1.9"/><rect x="1898.1" y="940.4" width="1.9" height="1.9"/></g>
<path d="M1421.1000000000001 968.0L1426.0 972.8L1421.1000000000001 977.5999999999999" stroke="#c8c8c8" stroke-width="1.3" fill="none" stroke-linecap="round" stroke-linejoin="round"/>
<g fill="#e6e6e6"><text x="1434.5" y="978.3" font-size="14">モーションパス</text></g>
<g fill="#8a8a8a"><rect x="1887" y="969.8" width="1.9" height="1.9"/><rect x="1887" y="973.4" width="1.9" height="1.9"/><rect x="1890.7" y="969.8" width="1.9" height="1.9"/><rect x="1890.7" y="973.4" width="1.9" height="1.9"/><rect x="1894.4" y="969.8" width="1.9" height="1.9"/><rect x="1894.4" y="973.4" width="1.9" height="1.9"/><rect x="1898.1" y="969.8" width="1.9" height="1.9"/><rect x="1898.1" y="973.4" width="1.9" height="1.9"/></g>
<path d="M1421.1000000000001 1001.0L1426.0 1005.8L1421.1000000000001 1010.5999999999999" stroke="#c8c8c8" stroke-width="1.3" fill="none" stroke-linecap="round" stroke-linejoin="round"/>
<g fill="#e6e6e6"><text x="1434.5" y="1011.3" font-size="14">可視性</text></g>
<g fill="#8a8a8a"><rect x="1887" y="1002.8" width="1.9" height="1.9"/><rect x="1887" y="1006.4" width="1.9" height="1.9"/><rect x="1890.7" y="1002.8" width="1.9" height="1.9"/><rect x="1890.7" y="1006.4" width="1.9" height="1.9"/><rect x="1894.4" y="1002.8" width="1.9" height="1.9"/><rect x="1894.4" y="1006.4" width="1.9" height="1.9"/><rect x="1898.1" y="1002.8" width="1.9" height="1.9"/><rect x="1898.1" y="1006.4" width="1.9" height="1.9"/></g>
<path d="M1421.1000000000001 1034.0L1426.0 1038.8L1421.1000000000001 1043.6" stroke="#c8c8c8" stroke-width="1.3" fill="none" stroke-linecap="round" stroke-linejoin="round"/>
<g fill="#e6e6e6"><text x="1434.5" y="1044.3" font-size="14">ビューポート表示</text></g>
<g fill="#8a8a8a"><rect x="1887" y="1035.8" width="1.9" height="1.9"/><rect x="1887" y="1039.4" width="1.9" height="1.9"/><rect x="1890.7" y="1035.8" width="1.9" height="1.9"/><rect x="1890.7" y="1039.4" width="1.9" height="1.9"/><rect x="1894.4" y="1035.8" width="1.9" height="1.9"/><rect x="1894.4" y="1039.4" width="1.9" height="1.9"/><rect x="1898.1" y="1035.8" width="1.9" height="1.9"/><rect x="1898.1" y="1039.4" width="1.9" height="1.9"/></g></svg>
<span class="tx" style="left:1439.5px;top:429.68px;font-size:14px;width:42px">立方体</span><span class="tx" style="left:1457px;top:474.38px;font-size:14px;width:42px">立方体</span><span class="tx" style="left:1434.6px;top:514.68px;font-size:14px;width:112px">トランスフォーム</span><span class="tx" style="left:1552.99px;top:551.08px;font-size:14px;width:28px">位置</span><span class="tx" style="left:1552.99px;top:632.08px;font-size:14px;width:28px">回転</span><span class="tx" style="left:1551.8px;top:714.28px;font-size:14px;width:42px">モード</span><span class="tx" style="left:1648px;top:714.28px;font-size:14px;width:70px">オイラー角</span><span class="tx" style="left:1524.99px;top:744.58px;font-size:14px;width:56px">スケール</span><span class="tx" style="left:1452px;top:834.48px;font-size:14px;width:154px">デルタトランスフォーム</span><span class="tx" style="left:1434.5px;top:866.98px;font-size:14px;width:28px">関係</span><span class="tx" style="left:1434.5px;top:899.98px;font-size:14px;width:84px">コレクション</span><span class="tx" style="left:1434.5px;top:932.98px;font-size:14px;width:98px">インスタンス化</span><span class="tx" style="left:1434.5px;top:965.98px;font-size:14px;width:98px">モーションパス</span><span class="tx" style="left:1434.5px;top:998.98px;font-size:14px;width:42px">可視性</span><span class="tx" style="left:1434.5px;top:1031.98px;font-size:14px;width:112px">ビューポート表示</span>
</div>
<div class="sec" id="annotations">

<svg class="ov" width="1920" height="1080" viewBox="0 0 1920 1080"><rect x="452.1" y="398.3" width="414.9" height="53.3" fill="none" stroke="#ed1c24" stroke-width="8.2"/>
<rect x="1412.1" y="496.6" width="488.1" height="325" fill="none" stroke="#ed1c24" stroke-width="8.2"/>
<path d="M1006 308.9L866 426.1" stroke="#ed1c24" stroke-width="8" fill="none"/></svg>

</div>
<div class="sec" id="caption">
<div style="left:813.6px;top:242.2px;width:894px;height:70.8px;background:#ffffff;"></div>
<svg class="ov" width="1920" height="1080" viewBox="0 0 1920 1080"><g fill="#000"><text x="817.2" y="290" font-size="37.3" font-weight="bold" textLength="876" lengthAdjust="spacingAndGlyphs">全トランスフォームを適応するとデフォルトの値に変換されます</text></g></svg>
<span class="tx" style="left:817.2px;top:257.18px;font-size:37.3px;width:876px">全トランスフォームを適応するとデフォルトの値に変換されます</span>
</div>
<div class="sec" id="annotations-top">

<svg class="ov" width="1920" height="1080" viewBox="0 0 1920 1080"><path d="M1296.8 314.2L1453.8 496.6" stroke="#ed1c24" stroke-width="7.5" fill="none"/><circle cx="1296.8" cy="314.2" r="3.75" fill="#ed1c24"/></svg>

</div>
</body></html>
